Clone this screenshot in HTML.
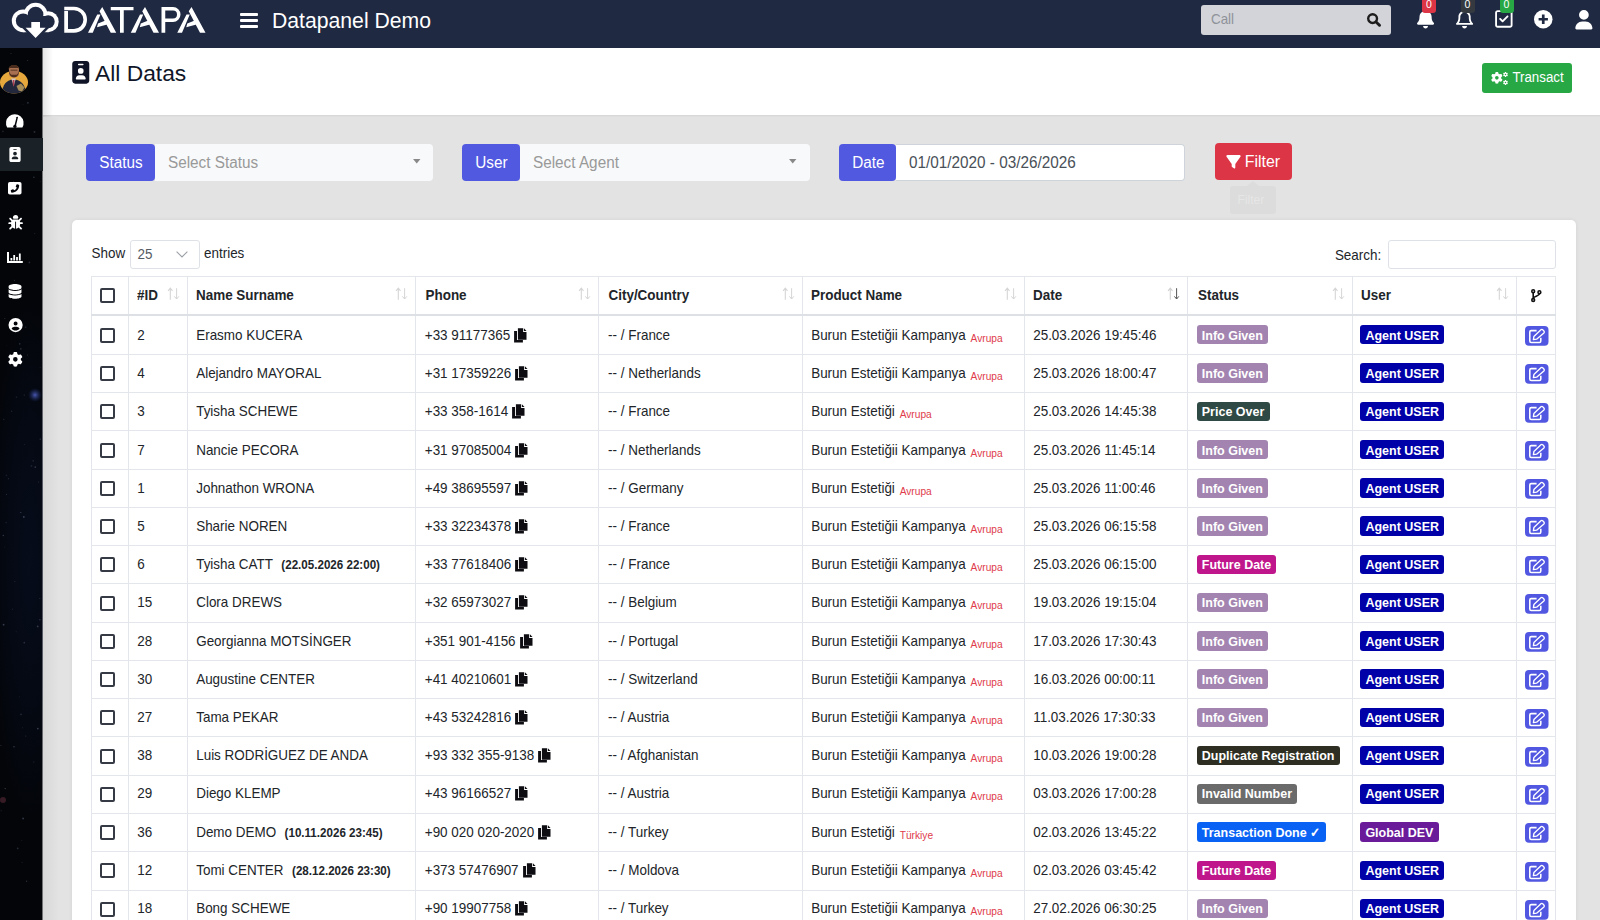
<!DOCTYPE html><html><head><meta charset="utf-8"><style>
html,body{margin:0;padding:0;width:1600px;height:920px;overflow:hidden;background:#e3e3e3;font-family:"Liberation Sans",sans-serif;}
.a{position:absolute;}
.t{position:absolute;line-height:1;white-space:nowrap;}
svg{overflow:visible}
</style></head><body>
<div class="a" style="left:0.00px;top:0.00px;width:1600.00px;height:48.00px;background:#1f2942;"></div>
<svg class="a" style="left:0.00px;top:0.00px;" width="220.00" height="48.00" viewBox="0 0 220 48"><g fill="#fff">
<circle cx="23.2" cy="20.8" r="11.4"/><circle cx="35.6" cy="14.6" r="11.8"/><circle cx="48.2" cy="21.7" r="10.5"/>
<rect x="23.2" y="14.6" width="25" height="17.6"/></g>
<g fill="#1f2942"><circle cx="23.2" cy="20.8" r="7.4"/><circle cx="35.6" cy="14.6" r="7.8"/><circle cx="48.2" cy="21.7" r="6.5"/>
<rect x="23.2" y="16" width="25" height="12.2"/></g>
<path d="M31.3 21.9 H40 V27.8 H45.6 L35.6 38.1 L25.6 27.8 H31.3 Z" fill="#1f2942" stroke="#1f2942" stroke-width="5" stroke-linejoin="miter"/>
<path d="M31.3 21.9 H40 V27.8 H45.6 L35.6 38.1 L25.6 27.8 H31.3 Z" fill="#fff"/>
<g fill="#fff">
<path d="M64.25 6.75 H74 A13 13 0 0 1 74 32.75 H64.25 V11.1 H68 V29.1 H74 A9.35 9.35 0 0 0 74 10.25 H64.25 Z"/>
<path d="M99.50 11.25 L102.25 7.00 L116.25 32.75 L110.75 32.75 Z M88.00 32.75 L92.75 32.75 L100.50 14.50 L97.25 14.50 Z M97.00 27.25 L98.00 23.60 L105.50 20.40 L107.20 24.50 Z"/>
<path d="M110.75 7 H133.5 V10.25 H123.75 V32.75 H120 V10.25 H110.75 Z"/>
<path d="M142.25 11.25 L145.00 7.00 L159.00 32.75 L153.50 32.75 Z M130.75 32.75 L135.50 32.75 L143.25 14.50 L140.00 14.50 Z M139.75 27.25 L140.75 23.60 L148.25 20.40 L149.95 24.50 Z"/>
<path d="M161.5 7 H173 A7.5 7.5 0 0 1 173 22 H165.25 V32.75 H161.5 Z M165.25 10.5 V18.5 H173 A4 4 0 0 0 173 10.5 Z"/>
<path d="M188.75 11.25 L191.50 7.00 L205.50 32.75 L200.00 32.75 Z M177.25 32.75 L182.00 32.75 L189.75 14.50 L186.50 14.50 Z M186.25 27.25 L187.25 23.60 L194.75 20.40 L196.45 24.50 Z"/>
</g></svg>
<div class="a" style="left:239.80px;top:12.50px;width:18.40px;height:3.20px;background:#fff;border-radius:1px"></div>
<div class="a" style="left:239.80px;top:19.00px;width:18.40px;height:3.20px;background:#fff;border-radius:1px"></div>
<div class="a" style="left:239.80px;top:24.90px;width:18.40px;height:3.20px;background:#fff;border-radius:1px"></div>
<div class="t" style="left:272.00px;top:10.00px;font-size:21.2px;color:#fff;font-weight:400;">Datapanel Demo</div>
<div class="a" style="left:1201.00px;top:5.00px;width:190.00px;height:30.00px;background:#d3d4d9;border-radius:3px"></div>
<div class="t" style="left:1211.00px;top:13.00px;font-size:13.4px;color:#8e9299;font-weight:400;transform:scaleY(1.07);transform-origin:0 11.00px;">Call</div>
<svg class="a" style="left:1367.40px;top:12.80px;" width="13.80" height="13.20" viewBox="0 0 13.8 13.2"><circle cx="5.6" cy="5.6" r="4.4" fill="none" stroke="#1d1d1d" stroke-width="2.4"/><path d="M8.8 8.8 L12.6 12.4" stroke="#1d1d1d" stroke-width="2.8" stroke-linecap="round"/></svg>
<svg class="a" style="left:1416.60px;top:9.30px;" width="17.10" height="19.50" viewBox="0 0 448 512"><path fill="#fff" d="M224 0c-17.7 0-32 14.3-32 32V51.2C119 66 64 130.6 64 208v18.8c0 47-17.3 92.4-48.5 127.6l-7.4 8.3c-8.4 9.4-10.4 22.9-5.3 34.4S19.4 416 32 416H416c12.6 0 24-7.4 29.2-18.9s3.1-25-5.3-34.4l-7.4-8.3C401.3 319.2 384 273.9 384 226.8V208c0-77.4-55-142-128-156.8V32c0-17.7-14.3-32-32-32zm45.3 493.3c12-12 18.7-28.3 18.7-45.3H224 160c0 17 6.7 33.3 18.7 45.3s28.3 18.7 45.3 18.7s33.3-6.7 45.3-18.7z"/></svg>
<svg class="a" style="left:1455.60px;top:9.30px;" width="17.10" height="19.50" viewBox="0 0 448 512"><path fill="#fff" d="M224 0c-17.7 0-32 14.3-32 32V49.9C119.5 61.4 64 124.2 64 200v33.4c0 45.4-15.5 89.5-43.8 124.9L5.3 377c-5.8 7.2-6.9 17.1-2.9 25.4S14.8 416 24 416H424c9.2 0 17.6-5.3 21.6-13.6s2.9-18.2-2.9-25.4l-14.9-18.6C399.5 322.9 384 278.8 384 233.4V200c0-75.8-55.5-138.6-128-150.1V32c0-17.7-14.3-32-32-32zm0 96h8c57.4 0 104 46.6 104 104v33.4c0 47.9 13.9 94.6 39.7 134.6H72.3C98.1 328 112 281.3 112 233.4V200c0-57.4 46.6-104 104-104h8zm64 352H224 160c0 17 6.7 33.3 18.7 45.3s28.3 18.7 45.3 18.7s33.3-6.7 45.3-18.7s18.7-28.3 18.7-45.3z"/></svg>
<svg class="a" style="left:1494.60px;top:9.30px;" width="17.70" height="19.90" viewBox="0 0 448 512"><path fill="#fff" d="M64 80c-8.8 0-16 7.2-16 16V416c0 8.8 7.2 16 16 16H384c8.8 0 16-7.2 16-16V96c0-8.8-7.2-16-16-16H64zM0 96C0 60.7 28.7 32 64 32H384c35.3 0 64 28.7 64 64V416c0 35.3-28.7 64-64 64H64c-35.3 0-64-28.7-64-64V96zM337 209L209 337c-9.4 9.4-24.6 9.4-33.9 0l-64-64c-9.4-9.4-9.4-24.6 0-33.9s24.6-9.4 33.9 0l47 47L303 175c9.4-9.4 24.6-9.4 33.9 0s9.4 24.6 0 33.9z"/></svg>
<div class="a" style="left:1422.00px;top:-3.00px;width:14.00px;height:15.80px;background:#dc3545;border-radius:3px"></div>
<div class="t" style="left:1426.00px;top:-1.00px;font-size:10.5px;color:#fff;font-weight:400;transform:scaleY(1.07);transform-origin:0 9.00px;">0</div>
<div class="a" style="left:1460.50px;top:-3.00px;width:14.00px;height:15.80px;background:#343a40;border-radius:3px"></div>
<div class="t" style="left:1464.50px;top:-1.00px;font-size:10.5px;color:#fff;font-weight:400;transform:scaleY(1.07);transform-origin:0 9.00px;">0</div>
<div class="a" style="left:1499.50px;top:-3.00px;width:14.00px;height:15.80px;background:#28a745;border-radius:3px"></div>
<div class="t" style="left:1503.50px;top:-1.00px;font-size:10.5px;color:#fff;font-weight:400;transform:scaleY(1.07);transform-origin:0 9.00px;">0</div>
<svg class="a" style="left:1534.30px;top:9.80px;" width="18.50" height="18.50" viewBox="0 0 18.5 18.5"><circle cx="9.25" cy="9.25" r="9.25" fill="#fff"/><path d="M9.25 4.6 V13.9 M4.6 9.25 H13.9" stroke="#1f2942" stroke-width="2.7"/></svg>
<svg class="a" style="left:1575.00px;top:9.80px;" width="17.80" height="19.50" viewBox="0 0 448 512"><path fill="#fff" d="M224 256A128 128 0 1 0 224 0a128 128 0 1 0 0 256zm-45.7 48C79.8 304 0 383.8 0 482.3C0 498.7 13.3 512 29.7 512H418.3c16.4 0 29.7-13.3 29.7-29.7C448 383.8 368.2 304 269.7 304H178.3z"/></svg>
<svg class="a" style="left:0.00px;top:48.00px;overflow:hidden" width="42.50" height="872.00" viewBox="0 48 42.5 872"><defs><radialGradient id="glow1"><stop offset="0" stop-color="#5060c0" stop-opacity="0.9"/><stop offset="1" stop-color="#203070" stop-opacity="0"/></radialGradient><radialGradient id="glow2"><stop offset="0" stop-color="#0a1430" stop-opacity="0.45"/><stop offset="1" stop-color="#0c1a40" stop-opacity="0"/></radialGradient></defs><rect x="0" y="48" width="42.5" height="872" fill="#030509"/><ellipse cx="30" cy="560" rx="40" ry="260" fill="url(#glow2)"/><circle cx="35" cy="395" r="7" fill="url(#glow1)"/><circle cx="3" cy="800" r="3" fill="#6a3040" opacity="0.5"/><circle cx="13.6" cy="181.2" r="0.5" fill="rgba(200,210,255,0.21)"/><circle cx="34.5" cy="131.9" r="0.9" fill="rgba(200,210,255,0.20)"/><circle cx="9.0" cy="124.8" r="0.5" fill="rgba(200,210,255,0.16)"/><circle cx="3.8" cy="419.3" r="0.5" fill="rgba(200,210,255,0.25)"/><circle cx="39.8" cy="598.6" r="0.5" fill="rgba(200,210,255,0.20)"/><circle cx="24.2" cy="395.1" r="0.5" fill="rgba(200,210,255,0.28)"/><circle cx="23.4" cy="165.9" r="0.9" fill="rgba(200,210,255,0.16)"/><circle cx="4.9" cy="318.4" r="0.5" fill="rgba(200,210,255,0.24)"/><circle cx="4.3" cy="546.9" r="0.5" fill="rgba(200,210,255,0.12)"/><circle cx="23.0" cy="104.6" r="0.5" fill="rgba(200,210,255,0.09)"/><circle cx="20.8" cy="512.6" r="0.7" fill="rgba(200,210,255,0.24)"/><circle cx="24.6" cy="444.3" r="0.5" fill="rgba(200,210,255,0.14)"/><circle cx="29.4" cy="262.4" r="0.9" fill="rgba(200,210,255,0.19)"/><circle cx="20.8" cy="348.8" r="0.9" fill="rgba(200,210,255,0.17)"/><circle cx="41.2" cy="152.7" r="0.7" fill="rgba(200,210,255,0.16)"/><circle cx="6.4" cy="475.4" r="0.9" fill="rgba(200,210,255,0.09)"/><circle cx="3.3" cy="535.5" r="0.7" fill="rgba(200,210,255,0.24)"/><circle cx="14.3" cy="354.7" r="0.7" fill="rgba(200,210,255,0.18)"/><circle cx="2.9" cy="131.4" r="0.9" fill="rgba(200,210,255,0.13)"/><circle cx="27.9" cy="102.8" r="0.9" fill="rgba(200,210,255,0.22)"/><circle cx="24.3" cy="642.7" r="0.9" fill="rgba(200,210,255,0.17)"/><circle cx="16.2" cy="631.7" r="0.7" fill="rgba(200,210,255,0.08)"/><circle cx="14.9" cy="581.5" r="0.5" fill="rgba(200,210,255,0.18)"/><circle cx="32.3" cy="162.5" r="0.7" fill="rgba(200,210,255,0.13)"/><circle cx="38.5" cy="482.0" r="0.7" fill="rgba(200,210,255,0.11)"/><circle cx="23.1" cy="818.5" r="0.9" fill="rgba(200,210,255,0.24)"/><circle cx="11.7" cy="411.3" r="0.7" fill="rgba(200,210,255,0.15)"/><circle cx="40.2" cy="181.3" r="0.5" fill="rgba(200,210,255,0.12)"/><circle cx="27.7" cy="60.5" r="0.5" fill="rgba(200,210,255,0.25)"/><circle cx="11.0" cy="53.6" r="0.7" fill="rgba(200,210,255,0.16)"/><circle cx="25.6" cy="327.2" r="0.9" fill="rgba(200,210,255,0.11)"/><circle cx="39.9" cy="619.8" r="0.7" fill="rgba(200,210,255,0.23)"/><circle cx="37.8" cy="728.6" r="0.9" fill="rgba(200,210,255,0.25)"/><circle cx="16.5" cy="397.1" r="0.9" fill="rgba(200,210,255,0.10)"/><circle cx="16.8" cy="215.8" r="0.7" fill="rgba(200,210,255,0.28)"/><circle cx="6.8" cy="345.8" r="0.5" fill="rgba(200,210,255,0.09)"/><circle cx="23.8" cy="516.9" r="0.9" fill="rgba(200,210,255,0.27)"/><circle cx="1.1" cy="810.7" r="0.5" fill="rgba(200,210,255,0.20)"/><circle cx="26.6" cy="881.3" r="0.7" fill="rgba(200,210,255,0.20)"/><circle cx="5.2" cy="788.6" r="0.7" fill="rgba(200,210,255,0.28)"/><circle cx="20.2" cy="321.3" r="0.9" fill="rgba(200,210,255,0.11)"/><circle cx="14.4" cy="280.3" r="0.5" fill="rgba(200,210,255,0.25)"/><circle cx="21.7" cy="228.5" r="0.7" fill="rgba(200,210,255,0.27)"/><circle cx="6.2" cy="522.6" r="0.9" fill="rgba(200,210,255,0.09)"/><circle cx="12.5" cy="609.3" r="0.7" fill="rgba(200,210,255,0.10)"/><circle cx="21.8" cy="840.2" r="0.5" fill="rgba(200,210,255,0.15)"/><circle cx="22.4" cy="727.8" r="0.5" fill="rgba(200,210,255,0.15)"/><circle cx="25.8" cy="735.9" r="0.5" fill="rgba(200,210,255,0.23)"/><circle cx="33.9" cy="761.9" r="0.5" fill="rgba(200,210,255,0.23)"/><circle cx="8.4" cy="478.7" r="0.5" fill="rgba(200,210,255,0.23)"/><circle cx="33.2" cy="460.8" r="0.9" fill="rgba(200,210,255,0.12)"/><circle cx="40.2" cy="439.1" r="0.7" fill="rgba(200,210,255,0.27)"/><circle cx="40.1" cy="367.2" r="0.5" fill="rgba(200,210,255,0.12)"/><circle cx="19.7" cy="343.8" r="0.9" fill="rgba(200,210,255,0.18)"/><circle cx="35.3" cy="467.1" r="0.9" fill="rgba(200,210,255,0.21)"/><circle cx="3.6" cy="624.7" r="0.9" fill="rgba(200,210,255,0.26)"/><circle cx="31.5" cy="465.9" r="0.9" fill="rgba(200,210,255,0.12)"/><circle cx="14.0" cy="746.7" r="0.7" fill="rgba(200,210,255,0.27)"/><circle cx="19.5" cy="696.7" r="0.5" fill="rgba(200,210,255,0.10)"/><circle cx="7.1" cy="160.5" r="0.7" fill="rgba(200,210,255,0.11)"/><circle cx="33.9" cy="177.2" r="0.7" fill="rgba(200,210,255,0.25)"/><circle cx="27.6" cy="354.9" r="0.5" fill="rgba(200,210,255,0.19)"/><circle cx="0.9" cy="745.4" r="0.5" fill="rgba(200,210,255,0.23)"/><circle cx="22.1" cy="862.3" r="0.5" fill="rgba(200,210,255,0.17)"/><circle cx="34.7" cy="233.6" r="0.7" fill="rgba(200,210,255,0.13)"/><circle cx="21.0" cy="714.4" r="0.9" fill="rgba(200,210,255,0.15)"/><circle cx="17.6" cy="164.0" r="0.7" fill="rgba(200,210,255,0.26)"/><circle cx="37.7" cy="626.4" r="0.9" fill="rgba(200,210,255,0.24)"/><circle cx="17.7" cy="848.4" r="0.9" fill="rgba(200,210,255,0.18)"/><circle cx="6.4" cy="494.2" r="0.5" fill="rgba(200,210,255,0.25)"/></svg>
<div class="a" style="left:0.00px;top:137.50px;width:42.50px;height:33.20px;background:#1b2227;"></div>
<svg class="a" style="left:0.00px;top:0.00px;" width="42.00" height="100.00" viewBox="0 0 42 100"><defs><clipPath id="avc"><ellipse cx="14" cy="82.3" rx="14" ry="11.3"/></clipPath></defs><ellipse cx="14" cy="82.3" rx="14" ry="11.3" fill="#e6a83c"/><g clip-path="url(#avc)"><path d="M1.5 97 C2 86 5 80.2 13.5 79.2 C22 80.2 25.5 85 27 97 Z" fill="#24283c"/><path d="M11.2 78.6 H16 L14.8 82 L13.6 86 L12.4 82 Z" fill="#d8c4c4"/><path d="M12.7 80 H14.5 L14.3 84.8 L13.6 86.8 L12.9 84.8 Z" fill="#a84050"/><path d="M16.5 86 L21 83.6 L24.5 87.5 L22 91.5 L18.5 90.5 Z" fill="#c8a860" opacity="0.8"/></g><path d="M9.0 68.5 C9.0 64.0 19.0 64.0 19.0 68.5 L18.8 74.8 C18 78.4 10 78.4 9.2 74.8 Z" fill="#a87050"/><path d="M8.4 70.0 C8.0 63.2 19.8 63.2 19.4 70.0 L18.6 68.0 L9.4 68.0 Z" fill="#4a2c1c"/><path d="M9.0 71.0 C8.8 79.4 19.2 79.4 19.0 71.0 L18.0 73.4 L16.6 74.8 L11.4 74.8 L10.0 73.4 Z" fill="#4e2e1e"/><rect x="10.6" y="69.6" width="6.8" height="1.2" fill="#3a2418" opacity="0.6"/></svg>
<svg class="a" style="left:6.40px;top:113.50px;" width="17.60" height="13.50" viewBox="0 0 17.6 13.5"><path fill="#fff" d="M1.2 13.5 A8.8 8.8 0 1 1 16.4 13.5 Z"/><path d="M11.2 3.4 L9.2 11.8" stroke="#05070d" stroke-width="1.5" stroke-linecap="round"/><circle cx="8.9" cy="12.4" r="1.7" fill="#05070d"/></svg>
<svg class="a" style="left:9.20px;top:146.70px;" width="12.00" height="15.00" viewBox="0 0 384 512"><path fill="#fff" d="M64 0C28.7 0 0 28.7 0 64V448c0 35.3 28.7 64 64 64H320c35.3 0 64-28.7 64-64V64c0-35.3-28.7-64-64-64H64zm96 320h64c44.2 0 80 35.8 80 80c0 8.8-7.2 16-16 16H96c-8.8 0-16-7.2-16-16c0-44.2 35.8-80 80-80zm-32-96a64 64 0 1 1 128 0 64 64 0 1 1 -128 0zM144 64h96c8.8 0 16 7.2 16 16s-7.2 16-16 16H144c-8.8 0-16-7.2-16-16s7.2-16 16-16z"/></svg>
<svg class="a" style="left:8.20px;top:182.00px;" width="13.50" height="12.50" viewBox="0 0 13.5 12.5"><rect x="0" y="0" width="13.5" height="12.5" rx="1.8" fill="#fff"/><g transform="translate(11.2,2.3) scale(-0.0165,0.0165)"><path fill="#05070d" d="M164.9 24.6c-7.7-18.6-28-28.5-47.4-23.2l-88 24C12.1 30.2 0 46 0 64C0 311.4 200.6 512 448 512c18 0 33.8-12.1 38.6-29.5l24-88c5.3-19.4-4.6-39.7-23.2-47.4l-96-40c-16.3-6.8-35.2-2.1-46.3 11.6L304.7 368C234.3 334.7 177.3 277.700 144 207.3L193.3 167c13.7-11.2 18.4-30 11.6-46.3l-40-96z"/></g></svg>
<svg class="a" style="left:7.60px;top:214.60px;" width="15.20" height="14.60" viewBox="0 0 512 512"><path fill="#fff" d="M256 0c53 0 96 43 96 96v3.6c0 15.7-12.7 28.4-28.4 28.4H188.4c-15.7 0-28.4-12.7-28.4-28.4V96c0-53 43-96 96-96zM41.4 105.4c12.5-12.5 32.8-12.5 45.3 0l64 64c.7 .7 1.3 1.4 1.9 2.1c14.2-7.3 30.4-11.4 47.5-11.4H312c17.1 0 33.2 4.1 47.5 11.4c.6-.7 1.2-1.4 1.900-2.1l64-64c12.5-12.5 32.8-12.5 45.3 0s12.5 32.8 0 45.3l-64 64c-.7 .7-1.4 1.3-2.1 1.9c6.2 12 10.1 25.3 11.1 39.5H480c17.7 0 32 14.3 32 32s-14.3 32-32 32H416c0 24.6-5.5 47.8-15.4 68.6c2.2 1.3 4.2 2.9 6 4.8l64 64c12.5 12.5 12.5 32.8 0 45.300s-32.8 12.5-45.3 0l-63.1-63.1c-24.5 21.8-55.8 36.2-90.3 39.6V240c0-8.8-7.2-16-16-16s-16 7.2-16 16V479.2c-34.5-3.4-65.8-17.8-90.3-39.6L86.6 502.6c-12.5 12.5-32.8 12.5-45.3 0s-12.5-32.8 0-45.3l64-64c1.9-1.9 3.9-3.4 6-4.8C101.5 367.8 96 344.6 96 320H32c-17.7 0-32-14.3-32-32s14.3-32 32-32H96.3c1.1-14.1 5-27.5 11.1-39.5c-.7-.6-1.4-1.2-2.1-1.9l-64-64c-12.5-12.5-12.5-32.8 0-45.3z"/></svg>
<svg class="a" style="left:7.00px;top:251.50px;" width="15.80" height="11.00" viewBox="0 0 15.8 11"><path fill="#fff" d="M0 0 H2 V9 H15.8 V11 H0 Z"/><rect x="3.5" y="6" width="1.8" height="2.5" fill="#fff"/><rect x="6.3" y="3" width="1.8" height="5.5" fill="#fff"/><rect x="9.1" y="5" width="1.8" height="3.5" fill="#fff"/><rect x="11.9" y="1.5" width="1.8" height="7" fill="#fff"/></svg>
<svg class="a" style="left:8.20px;top:283.60px;" width="14.10" height="14.70" viewBox="0 0 448 512"><path fill="#fff" d="M448 80v48c0 44.2-100.3 80-224 80S0 172.2 0 128V80C0 35.8 100.3 0 224 0S448 35.8 448 80zM393.2 214.7c20.8-7.4 39.9-16.9 54.8-28.6V288c0 44.2-100.3 80-224 80S0 332.2 0 288V186.1c14.9 11.8 34 21.2 54.8 28.6C99.7 230.7 159.5 240 224 240s124.3-9.3 169.2-25.3zM0 346.1c14.9 11.8 34 21.2 54.8 28.6C99.7 390.7 159.5 400 224 400s124.3-9.3 169.2-25.3c20.8-7.4 39.9-16.9 54.8-28.6V432c0 44.2-100.3 80-224 80S0 476.2 0 432V346.1z"/></svg>
<svg class="a" style="left:7.60px;top:317.80px;" width="15.20" height="14.20" viewBox="0 0 512 512"><path fill="#fff" d="M399 384.2C376.9 345.8 335.4 320 288 320H224c-47.4 0-88.9 25.8-111 64.2c35.2 39.2 86.2 63.8 143 63.8s107.8-24.7 143-63.8zM0 256a256 256 0 1 1 512 0A256 256 0 1 1 0 256zm256 16a72 72 0 1 0 0-144 72 72 0 1 0 0 144z"/></svg>
<svg class="a" style="left:7.60px;top:351.50px;" width="14.70" height="14.70" viewBox="0 0 512 512"><path fill="#fff" d="M495.9 166.6c3.2 8.7 .5 18.4-6.4 24.6l-43.3 39.4c1.1 8.3 1.7 16.8 1.7 25.4s-.6 17.1-1.7 25.4l43.3 39.4c6.9 6.2 9.6 15.9 6.4 24.6c-4.4 11.9-9.7 23.3-15.8 34.3l-4.7 8.1c-6.6 11-14 21.4-22.1 31.2c-5.9 7.2-15.7 9.6-24.5 6.8l-55.7-17.7c-13.4 10.3-28.2 18.9-44 25.4l-12.5 57.1c-2 9.1-9 16.3-18.2 17.8c-13.8 2.3-28 3.5-42.5 3.5s-28.7-1.2-42.5-3.5c-9.2-1.5-16.2-8.7-18.2-17.8l-12.5-57.1c-15.8-6.5-30.6-15.1-44-25.4L83.1 425.9c-8.8 2.8-18.6 .3-24.5-6.8c-8.1-9.8-15.5-20.2-22.1-31.2l-4.7-8.1c-6.1-11-11.4-22.4-15.8-34.3c-3.2-8.7-.5-18.4 6.4-24.6l43.3-39.4C64.6 273.1 64 264.6 64 256s.6-17.1 1.7-25.4L22.4 191.2c-6.9-6.2-9.6-15.9-6.4-24.6c4.4-11.9 9.7-23.3 15.8-34.3l4.7-8.1c6.6-11 14-21.4 22.1-31.2c5.9-7.2 15.7-9.6 24.5-6.8l55.7 17.7c13.4-10.3 28.2-18.9 44-25.4l12.5-57.1c2-9.1 9-16.3 18.2-17.8C227.3 1.2 241.5 0 256 0s28.7 1.2 42.5 3.5c9.2 1.5 16.2 8.7 18.2 17.8l12.5 57.1c15.8 6.5 30.600 15.1 44 25.4l55.7-17.7c8.8-2.8 18.6-.3 24.5 6.8c8.1 9.8 15.5 20.2 22.1 31.2l4.7 8.1c6.1 11 11.4 22.4 15.8 34.3zM256 336a80 80 0 1 0 0-160 80 80 0 1 0 0 160z"/></svg>
<div class="a" style="left:42.50px;top:48.00px;width:1557.50px;height:66.80px;background:#fff;"></div>
<div class="a" style="left:42.50px;top:114.80px;width:1557.50px;height:2.00px;background:linear-gradient(#d4d4d4,#e3e3e3);"></div>
<div class="a" style="left:42.50px;top:48.00px;width:10.00px;height:69.00px;background:linear-gradient(90deg,rgba(0,0,0,0.10),rgba(0,0,0,0));"></div>
<div class="a" style="left:42.50px;top:117.00px;width:16.00px;height:803.00px;background:linear-gradient(90deg,rgba(0,0,0,0.05),rgba(0,0,0,0));"></div>
<svg class="a" style="left:71.80px;top:61.00px;" width="17.50" height="22.70" viewBox="0 0 384 512"><path fill="#0f1426" d="M64 0C28.7 0 0 28.7 0 64V448c0 35.3 28.7 64 64 64H320c35.3 0 64-28.7 64-64V64c0-35.3-28.7-64-64-64H64zm96 320h64c44.2 0 80 35.8 80 80c0 8.8-7.2 16-16 16H96c-8.8 0-16-7.2-16-16c0-44.2 35.8-80 80-80zm-32-96a64 64 0 1 1 128 0 64 64 0 1 1 -128 0zM144 64h96c8.8 0 16 7.2 16 16s-7.2 16-16 16H144c-8.8 0-16-7.2-16-16s7.2-16 16-16z"/></svg>
<div class="t" style="left:95.00px;top:62.00px;font-size:22.8px;color:#0f1628;font-weight:400;">All Datas</div>
<div class="a" style="left:1482.00px;top:63.00px;width:90.00px;height:30.00px;background:#28a745;border-radius:3px"></div>
<svg class="a" style="left:1490.60px;top:72.20px;" width="11.70" height="11.70" viewBox="0 0 512 512"><path fill="#fff" d="M495.9 166.6c3.2 8.7 .5 18.4-6.4 24.6l-43.3 39.4c1.1 8.3 1.7 16.8 1.7 25.4s-.6 17.1-1.7 25.4l43.3 39.4c6.9 6.2 9.6 15.9 6.4 24.6c-4.4 11.9-9.7 23.3-15.8 34.3l-4.7 8.1c-6.6 11-14 21.4-22.1 31.2c-5.9 7.2-15.7 9.6-24.5 6.8l-55.7-17.7c-13.4 10.3-28.2 18.9-44 25.4l-12.5 57.1c-2 9.1-9 16.3-18.2 17.8c-13.8 2.3-28 3.5-42.5 3.5s-28.7-1.2-42.5-3.5c-9.2-1.5-16.2-8.7-18.2-17.8l-12.5-57.1c-15.8-6.5-30.6-15.1-44-25.4L83.1 425.9c-8.8 2.8-18.6 .3-24.5-6.8c-8.1-9.8-15.5-20.2-22.1-31.2l-4.7-8.1c-6.1-11-11.4-22.4-15.8-34.3c-3.2-8.7-.5-18.4 6.4-24.6l43.3-39.4C64.6 273.1 64 264.6 64 256s.6-17.1 1.7-25.4L22.4 191.2c-6.9-6.2-9.6-15.9-6.4-24.6c4.4-11.9 9.7-23.3 15.8-34.3l4.7-8.1c6.6-11 14-21.4 22.1-31.2c5.9-7.2 15.7-9.6 24.5-6.8l55.7 17.7c13.4-10.3 28.2-18.9 44-25.4l12.5-57.1c2-9.1 9-16.3 18.2-17.8C227.3 1.2 241.5 0 256 0s28.7 1.2 42.5 3.5c9.2 1.5 16.2 8.7 18.2 17.8l12.5 57.1c15.8 6.5 30.600 15.1 44 25.4l55.7-17.7c8.8-2.8 18.6-.3 24.5 6.8c8.1 9.8 15.5 20.2 22.1 31.2l4.7 8.1c6.1 11 11.4 22.4 15.8 34.3zM256 336a80 80 0 1 0 0-160 80 80 0 1 0 0 160z"/></svg>
<svg class="a" style="left:1503.00px;top:71.70px;" width="5.00" height="5.00" viewBox="0 0 512 512"><path fill="#fff" d="M495.9 166.6c3.2 8.7 .5 18.4-6.4 24.6l-43.3 39.4c1.1 8.3 1.7 16.8 1.7 25.4s-.6 17.1-1.7 25.4l43.3 39.4c6.9 6.2 9.6 15.9 6.4 24.6c-4.4 11.9-9.7 23.3-15.8 34.3l-4.7 8.1c-6.6 11-14 21.4-22.1 31.2c-5.9 7.2-15.7 9.6-24.5 6.8l-55.7-17.7c-13.4 10.3-28.2 18.9-44 25.4l-12.5 57.1c-2 9.1-9 16.3-18.2 17.8c-13.8 2.3-28 3.5-42.5 3.5s-28.7-1.2-42.5-3.5c-9.2-1.5-16.2-8.7-18.2-17.8l-12.5-57.1c-15.8-6.5-30.6-15.1-44-25.4L83.1 425.9c-8.8 2.8-18.6 .3-24.5-6.8c-8.1-9.8-15.5-20.2-22.1-31.2l-4.7-8.1c-6.1-11-11.4-22.4-15.8-34.3c-3.2-8.7-.5-18.4 6.4-24.6l43.3-39.4C64.6 273.1 64 264.6 64 256s.6-17.1 1.7-25.4L22.4 191.2c-6.9-6.2-9.6-15.9-6.4-24.6c4.4-11.9 9.7-23.3 15.8-34.3l4.7-8.1c6.6-11 14-21.4 22.1-31.2c5.9-7.2 15.7-9.6 24.5-6.8l55.7 17.7c13.4-10.3 28.2-18.9 44-25.4l12.5-57.1c2-9.1 9-16.3 18.2-17.8C227.3 1.2 241.5 0 256 0s28.7 1.2 42.5 3.5c9.2 1.5 16.2 8.7 18.2 17.8l12.5 57.1c15.8 6.5 30.600 15.1 44 25.4l55.7-17.7c8.8-2.8 18.6-.3 24.5 6.8c8.1 9.8 15.5 20.2 22.1 31.2l4.7 8.1c6.1 11 11.4 22.4 15.8 34.3zM256 336a80 80 0 1 0 0-160 80 80 0 1 0 0 160z"/></svg>
<svg class="a" style="left:1503.00px;top:79.60px;" width="5.00" height="5.00" viewBox="0 0 512 512"><path fill="#fff" d="M495.9 166.6c3.2 8.7 .5 18.4-6.4 24.6l-43.3 39.4c1.1 8.3 1.7 16.8 1.7 25.4s-.6 17.1-1.7 25.4l43.3 39.4c6.9 6.2 9.6 15.9 6.4 24.6c-4.4 11.9-9.7 23.3-15.8 34.3l-4.7 8.1c-6.6 11-14 21.4-22.1 31.2c-5.9 7.2-15.7 9.6-24.5 6.8l-55.7-17.7c-13.4 10.3-28.2 18.9-44 25.4l-12.5 57.1c-2 9.1-9 16.3-18.2 17.8c-13.8 2.3-28 3.5-42.5 3.5s-28.7-1.2-42.5-3.5c-9.2-1.5-16.2-8.7-18.2-17.8l-12.5-57.1c-15.8-6.5-30.6-15.1-44-25.4L83.1 425.9c-8.8 2.8-18.6 .3-24.5-6.8c-8.1-9.8-15.5-20.2-22.1-31.2l-4.7-8.1c-6.1-11-11.4-22.4-15.8-34.3c-3.2-8.7-.5-18.4 6.4-24.6l43.3-39.4C64.6 273.1 64 264.6 64 256s.6-17.1 1.7-25.4L22.4 191.2c-6.9-6.2-9.6-15.9-6.4-24.6c4.4-11.9 9.7-23.3 15.8-34.3l4.7-8.1c6.6-11 14-21.4 22.1-31.2c5.9-7.2 15.7-9.6 24.5-6.8l55.7 17.7c13.4-10.3 28.2-18.9 44-25.4l12.5-57.1c2-9.1 9-16.3 18.2-17.8C227.3 1.2 241.5 0 256 0s28.7 1.2 42.5 3.5c9.2 1.5 16.2 8.7 18.2 17.8l12.5 57.1c15.8 6.5 30.600 15.1 44 25.4l55.7-17.7c8.8-2.8 18.6-.3 24.5 6.8c8.1 9.8 15.5 20.2 22.1 31.2l4.7 8.1c6.1 11 11.4 22.4 15.8 34.3zM256 336a80 80 0 1 0 0-160 80 80 0 1 0 0 160z"/></svg>
<div class="t" style="left:1512.40px;top:71.00px;font-size:13.3px;color:#fff;font-weight:400;transform:scaleY(1.07);transform-origin:0 11.00px;">Transact</div>
<div class="a" style="left:86.00px;top:144.00px;width:69.00px;height:36.60px;background:#5059e0;border-radius:4px"></div>
<div class="t" style="left:99.30px;top:155.00px;font-size:15.3px;color:#fff;font-weight:400;transform:scaleY(1.07);transform-origin:0 13.00px;">Status</div>
<div class="a" style="left:155.00px;top:144.00px;width:278.00px;height:36.60px;background:#f8f9fa;border-radius:0 4px 4px 0;box-sizing:border-box;"></div>
<div class="t" style="left:168.00px;top:155.00px;font-size:15.3px;color:#999;font-weight:400;transform:scaleY(1.07);transform-origin:0 13.00px;">Select Status</div>
<svg class="a" style="left:412.50px;top:159.40px;" width="7.50" height="4.40" viewBox="0 0 10 6"><path d="M0 0 H10 L5 6 Z" fill="#888"/></svg>
<div class="a" style="left:462.00px;top:144.00px;width:58.00px;height:36.60px;background:#5059e0;border-radius:4px"></div>
<div class="t" style="left:475.30px;top:155.00px;font-size:15.3px;color:#fff;font-weight:400;transform:scaleY(1.07);transform-origin:0 13.00px;">User</div>
<div class="a" style="left:520.00px;top:144.00px;width:289.50px;height:36.60px;background:#f8f9fa;border-radius:0 4px 4px 0;box-sizing:border-box;"></div>
<div class="t" style="left:533.00px;top:155.00px;font-size:15.3px;color:#999;font-weight:400;transform:scaleY(1.07);transform-origin:0 13.00px;">Select Agent</div>
<svg class="a" style="left:789.00px;top:159.40px;" width="7.50" height="4.40" viewBox="0 0 10 6"><path d="M0 0 H10 L5 6 Z" fill="#888"/></svg>
<div class="a" style="left:839.00px;top:144.00px;width:57.00px;height:36.60px;background:#5059e0;border-radius:4px"></div>
<div class="t" style="left:852.30px;top:155.00px;font-size:15.3px;color:#fff;font-weight:400;transform:scaleY(1.07);transform-origin:0 13.00px;">Date</div>
<div class="a" style="left:896.00px;top:144.00px;width:288.50px;height:36.60px;background:#fff;border-radius:0 4px 4px 0;box-sizing:border-box;border:1px solid #ced4da;border-left:none;"></div>
<div class="t" style="left:909.00px;top:155.00px;font-size:15.3px;color:#495057;font-weight:400;transform:scaleY(1.07);transform-origin:0 13.00px;">01/01/2020 - 03/26/2026</div>
<div class="a" style="left:1214.50px;top:143.10px;width:77.50px;height:36.65px;background:#dc3545;border-radius:4px"></div>
<svg class="a" style="left:1226.00px;top:155.00px;" width="15.00" height="14.40" viewBox="0 0 512 512"><path fill="#fff" d="M3.9 22.9C10.5 8.9 24.5 0 40 0H472c15.5 0 29.5 8.9 36.1 22.9s4.6 30.5-5.2 42.5L320 320.9V448c0 12.1-6.8 23.2-17.700 28.6s-23.8 4.3-33.5-3l-64-48c-8.1-6-12.8-15.5-12.8-25.6V320.9L9 65.3C-.7 53.4-2.8 36.8 3.9 22.9z"/></svg>
<div class="t" style="left:1244.80px;top:154.00px;font-size:15.9px;color:#fff;font-weight:400;transform:scaleY(1.07);transform-origin:0 13.00px;">Filter</div>
<div class="a" style="left:1230.00px;top:185.60px;width:45.60px;height:28.20px;background:#dcdcdc;border-radius:3px"></div>
<svg class="a" style="left:1247.00px;top:181.00px;" width="12.00" height="5.00" viewBox="0 0 12 5"><path d="M0 5 L6 0 L12 5 Z" fill="#dcdcdc"/></svg>
<div class="t" style="left:1237.60px;top:194.00px;font-size:12px;color:#e6e6e6;font-weight:400;transform:scaleY(1.07);transform-origin:0 10.00px;">Filter</div>
<div class="a" style="left:72.00px;top:220.00px;width:1504.00px;height:760.00px;background:#fff;border-radius:5px;box-shadow:0 0 4px rgba(0,0,0,0.07)"></div>
<div class="t" style="left:91.50px;top:247.00px;font-size:13.45px;color:#212529;font-weight:400;transform:scaleY(1.07);transform-origin:0 11.00px;">Show</div>
<div class="a" style="left:129.50px;top:239.50px;width:70.50px;height:29.00px;background:#fff;border:1px solid #dee2e6;border-radius:3px;box-sizing:border-box"></div>
<div class="t" style="left:137.50px;top:248.00px;font-size:13.45px;color:#555b62;font-weight:400;transform:scaleY(1.07);transform-origin:0 11.00px;">25</div>
<svg class="a" style="left:176.00px;top:251.00px;" width="12.00" height="6.50" viewBox="0 0 12 6.5"><path d="M0.6 0.6 L6 5.9 L11.4 0.6" fill="none" stroke="#9aa0a6" stroke-width="1.1"/></svg>
<div class="t" style="left:204.00px;top:247.00px;font-size:13.45px;color:#212529;font-weight:400;transform:scaleY(1.07);transform-origin:0 11.00px;">entries</div>
<div class="t" style="left:1334.90px;top:249.00px;font-size:13.45px;color:#212529;font-weight:400;transform:scaleY(1.07);transform-origin:0 11.00px;">Search:</div>
<div class="a" style="left:1388.25px;top:239.50px;width:167.70px;height:29.10px;background:#fff;border:1px solid #dee2e6;border-radius:3px;box-sizing:border-box"></div>
<div class="a" style="left:91.00px;top:275.60px;width:1.00px;height:644.40px;background:#e3e6ea;"></div>
<div class="a" style="left:128.00px;top:275.60px;width:1.00px;height:644.40px;background:#e3e6ea;"></div>
<div class="a" style="left:187.00px;top:275.60px;width:1.00px;height:644.40px;background:#e3e6ea;"></div>
<div class="a" style="left:415.00px;top:275.60px;width:1.00px;height:644.40px;background:#e3e6ea;"></div>
<div class="a" style="left:598.00px;top:275.60px;width:1.00px;height:644.40px;background:#e3e6ea;"></div>
<div class="a" style="left:802.00px;top:275.60px;width:1.00px;height:644.40px;background:#e3e6ea;"></div>
<div class="a" style="left:1024.00px;top:275.60px;width:1.00px;height:644.40px;background:#e3e6ea;"></div>
<div class="a" style="left:1187.00px;top:275.60px;width:1.00px;height:644.40px;background:#e3e6ea;"></div>
<div class="a" style="left:1352.00px;top:275.60px;width:1.00px;height:644.40px;background:#e3e6ea;"></div>
<div class="a" style="left:1516.00px;top:275.60px;width:1.00px;height:644.40px;background:#e3e6ea;"></div>
<div class="a" style="left:1555.00px;top:275.60px;width:1.00px;height:644.40px;background:#e3e6ea;"></div>
<div class="a" style="left:91.00px;top:275.60px;width:1465.00px;height:1.00px;background:#e3e6ea;"></div>
<div class="a" style="left:91.00px;top:314.00px;width:1465.00px;height:2.00px;background:#dde1e5;"></div>
<div class="a" style="left:91.00px;top:353.86px;width:1465.00px;height:1.00px;background:#e3e6ea;"></div>
<div class="a" style="left:91.00px;top:392.12px;width:1465.00px;height:1.00px;background:#e3e6ea;"></div>
<div class="a" style="left:91.00px;top:430.38px;width:1465.00px;height:1.00px;background:#e3e6ea;"></div>
<div class="a" style="left:91.00px;top:468.64px;width:1465.00px;height:1.00px;background:#e3e6ea;"></div>
<div class="a" style="left:91.00px;top:506.90px;width:1465.00px;height:1.00px;background:#e3e6ea;"></div>
<div class="a" style="left:91.00px;top:545.16px;width:1465.00px;height:1.00px;background:#e3e6ea;"></div>
<div class="a" style="left:91.00px;top:583.42px;width:1465.00px;height:1.00px;background:#e3e6ea;"></div>
<div class="a" style="left:91.00px;top:621.68px;width:1465.00px;height:1.00px;background:#e3e6ea;"></div>
<div class="a" style="left:91.00px;top:659.94px;width:1465.00px;height:1.00px;background:#e3e6ea;"></div>
<div class="a" style="left:91.00px;top:698.20px;width:1465.00px;height:1.00px;background:#e3e6ea;"></div>
<div class="a" style="left:91.00px;top:736.46px;width:1465.00px;height:1.00px;background:#e3e6ea;"></div>
<div class="a" style="left:91.00px;top:774.72px;width:1465.00px;height:1.00px;background:#e3e6ea;"></div>
<div class="a" style="left:91.00px;top:812.98px;width:1465.00px;height:1.00px;background:#e3e6ea;"></div>
<div class="a" style="left:91.00px;top:851.24px;width:1465.00px;height:1.00px;background:#e3e6ea;"></div>
<div class="a" style="left:91.00px;top:889.50px;width:1465.00px;height:1.00px;background:#e3e6ea;"></div>
<div class="a" style="left:91.00px;top:927.76px;width:1465.00px;height:1.00px;background:#e3e6ea;"></div>
<div class="a" style="left:100.30px;top:288.00px;width:15.00px;height:15.00px;background:transparent;border:2px solid #353a44;border-radius:2px;box-sizing:border-box"></div>
<div class="t" style="left:137.00px;top:289.00px;font-size:13.45px;color:#212529;font-weight:700;transform:scaleY(1.07);transform-origin:0 11.00px;">#ID</div>
<div class="t" style="left:196.00px;top:289.00px;font-size:13.45px;color:#212529;font-weight:700;transform:scaleY(1.07);transform-origin:0 11.00px;">Name Surname</div>
<div class="t" style="left:425.50px;top:289.00px;font-size:13.45px;color:#212529;font-weight:700;transform:scaleY(1.07);transform-origin:0 11.00px;">Phone</div>
<div class="t" style="left:608.50px;top:289.00px;font-size:13.45px;color:#212529;font-weight:700;transform:scaleY(1.07);transform-origin:0 11.00px;">City/Country</div>
<div class="t" style="left:811.00px;top:289.00px;font-size:13.45px;color:#212529;font-weight:700;transform:scaleY(1.07);transform-origin:0 11.00px;">Product Name</div>
<div class="t" style="left:1033.00px;top:289.00px;font-size:13.45px;color:#212529;font-weight:700;transform:scaleY(1.07);transform-origin:0 11.00px;">Date</div>
<div class="t" style="left:1198.00px;top:289.00px;font-size:13.45px;color:#212529;font-weight:700;transform:scaleY(1.07);transform-origin:0 11.00px;">Status</div>
<div class="t" style="left:1361.00px;top:289.00px;font-size:13.45px;color:#212529;font-weight:700;transform:scaleY(1.07);transform-origin:0 11.00px;">User</div>
<svg class="a" style="left:167.50px;top:287.70px;" width="12.00" height="12.00" viewBox="0 0 12 12"><path d="M2.3 11.8 V0.4 M0.1 2.8 L2.3 0.2 L4.5 2.8" fill="none" stroke="#d5d5d5" stroke-width="1.1"/><path d="M8.6 0.2 V10.8 M6.4 8.4 L8.6 11.0 L10.8 8.4" fill="none" stroke="#d5d5d5" stroke-width="1"/></svg>
<svg class="a" style="left:395.50px;top:287.70px;" width="12.00" height="12.00" viewBox="0 0 12 12"><path d="M2.3 11.8 V0.4 M0.1 2.8 L2.3 0.2 L4.5 2.8" fill="none" stroke="#d5d5d5" stroke-width="1.1"/><path d="M8.6 0.2 V10.8 M6.4 8.4 L8.6 11.0 L10.8 8.4" fill="none" stroke="#d5d5d5" stroke-width="1"/></svg>
<svg class="a" style="left:578.50px;top:287.70px;" width="12.00" height="12.00" viewBox="0 0 12 12"><path d="M2.3 11.8 V0.4 M0.1 2.8 L2.3 0.2 L4.5 2.8" fill="none" stroke="#d5d5d5" stroke-width="1.1"/><path d="M8.6 0.2 V10.8 M6.4 8.4 L8.6 11.0 L10.8 8.4" fill="none" stroke="#d5d5d5" stroke-width="1"/></svg>
<svg class="a" style="left:782.50px;top:287.70px;" width="12.00" height="12.00" viewBox="0 0 12 12"><path d="M2.3 11.8 V0.4 M0.1 2.8 L2.3 0.2 L4.5 2.8" fill="none" stroke="#d5d5d5" stroke-width="1.1"/><path d="M8.6 0.2 V10.8 M6.4 8.4 L8.6 11.0 L10.8 8.4" fill="none" stroke="#d5d5d5" stroke-width="1"/></svg>
<svg class="a" style="left:1004.50px;top:287.70px;" width="12.00" height="12.00" viewBox="0 0 12 12"><path d="M2.3 11.8 V0.4 M0.1 2.8 L2.3 0.2 L4.5 2.8" fill="none" stroke="#d5d5d5" stroke-width="1.1"/><path d="M8.6 0.2 V10.8 M6.4 8.4 L8.6 11.0 L10.8 8.4" fill="none" stroke="#d5d5d5" stroke-width="1"/></svg>
<svg class="a" style="left:1167.50px;top:287.70px;" width="12.00" height="12.00" viewBox="0 0 12 12"><path d="M2.3 11.8 V0.4 M0.1 2.8 L2.3 0.2 L4.5 2.8" fill="none" stroke="#d0d0d0" stroke-width="1.1"/><path d="M8.6 0.2 V10.8 M6.4 8.4 L8.6 11.0 L10.8 8.4" fill="none" stroke="#555" stroke-width="1"/></svg>
<svg class="a" style="left:1332.50px;top:287.70px;" width="12.00" height="12.00" viewBox="0 0 12 12"><path d="M2.3 11.8 V0.4 M0.1 2.8 L2.3 0.2 L4.5 2.8" fill="none" stroke="#d5d5d5" stroke-width="1.1"/><path d="M8.6 0.2 V10.8 M6.4 8.4 L8.6 11.0 L10.8 8.4" fill="none" stroke="#d5d5d5" stroke-width="1"/></svg>
<svg class="a" style="left:1496.50px;top:287.70px;" width="12.00" height="12.00" viewBox="0 0 12 12"><path d="M2.3 11.8 V0.4 M0.1 2.8 L2.3 0.2 L4.5 2.8" fill="none" stroke="#d5d5d5" stroke-width="1.1"/><path d="M8.6 0.2 V10.8 M6.4 8.4 L8.6 11.0 L10.8 8.4" fill="none" stroke="#d5d5d5" stroke-width="1"/></svg>
<svg class="a" style="left:1531.00px;top:288.80px;" width="10.50" height="13.00" viewBox="0 0 10.5 13"><g fill="none" stroke="#111" stroke-width="1.6"><circle cx="2.2" cy="2.2" r="1.4"/><circle cx="2.2" cy="11" r="1.4"/><circle cx="8.4" cy="3.2" r="1.4"/><path d="M2.2 3.6 V9.6 M8.4 4.6 C8.4 7.5 2.2 6.8 2.2 9.6"/></g></svg>
<div class="a" style="left:100.30px;top:327.80px;width:15.00px;height:15.00px;background:transparent;border:2px solid #353a44;border-radius:2px;box-sizing:border-box"></div>
<div class="t" style="left:137.20px;top:329.00px;font-size:13.45px;color:#212529;font-weight:400;transform:scaleY(1.07);transform-origin:0 11.00px;">2</div>
<div class="t" style="left:196.20px;top:329.00px;font-size:13.45px;color:#212529;font-weight:400;transform:scaleY(1.07);transform-origin:0 11.00px;">Erasmo KUCERA</div>
<div class="t" style="left:424.80px;top:329.00px;font-size:13.45px;color:#212529;font-weight:400;transform:scaleY(1.07);transform-origin:0 11.00px;">+33 91177365<span style="position:relative;display:inline-block;width:17px;height:1px"><svg style="position:absolute;left:4.2px;top:-9.9px" width="12.5" height="14" viewBox="0 0 12.5 14"><path fill="#0d0d12" d="M3.9 0.0 H9.1 V3.5 H12.5 V10.7 H3.9 Z"/><path fill="#0d0d12" d="M9.9 0.0 L12.5 2.6 H9.9 Z"/><path fill="#0d0d12" d="M0.1 2.5 H3.0 V11.0 H8.9 V13.3 H0.1 Z"/></svg></span></div>
<div class="t" style="left:608.10px;top:329.00px;font-size:13.45px;color:#212529;font-weight:400;transform:scaleY(1.07);transform-origin:0 11.00px;">-- / France</div>
<div class="t" style="left:811.20px;top:329.00px;font-size:13.45px;color:#212529;font-weight:400;transform:scaleY(1.07);transform-origin:0 11.00px;">Burun Estetiğii Kampanya<span style="font-size:10.2px;color:#e03c4c;margin-left:4.8px;position:relative;top:2px">Avrupa</span></div>
<div class="t" style="left:1033.20px;top:329.00px;font-size:13.45px;color:#212529;font-weight:400;transform:scaleY(1.07);transform-origin:0 11.00px;">25.03.2026 19:45:46</div>
<div class="t" style="left:1196.60px;top:325.10px;height:19.4px;line-height:19.4px;padding:0 5.2px;box-sizing:border-box;font-size:12.5px;font-weight:700;color:#fff;background:#a384b0;border-radius:3px"><span style="display:inline-block;position:relative;top:2px;transform:scaleY(1.07);transform-origin:0 13px">Info Given</span></div>
<div class="t" style="left:1360.20px;top:325.10px;height:19.4px;line-height:19.4px;padding:0 5.2px;box-sizing:border-box;font-size:12.5px;font-weight:700;color:#fff;background:#0000a8;border-radius:3px"><span style="display:inline-block;position:relative;top:2px;transform:scaleY(1.07);transform-origin:0 13px">Agent USER</span></div>
<svg class="a" style="left:1524.60px;top:326.00px;" width="23.50" height="19.75" viewBox="0 0 23.5 19.75"><rect x="0" y="0" width="23.5" height="19.75" rx="4" fill="#5157e0"/><path d="M11.6 4.6 H6.2 Q4.8 4.6 4.8 6.0 V15.1 Q4.8 16.5 6.2 16.5 H14.4 Q15.8 16.5 15.8 15.1 V11.8" fill="none" stroke="#fff" stroke-width="1.55"/><path d="M8.4 13.6 L8.9 10.5 L15.9 3.8 Q16.9 2.9 17.9 3.9 L18.9 5.0 Q19.8 6.0 18.9 6.9 L11.6 13.2 Z" fill="none" stroke="#fff" stroke-width="1.35" stroke-linejoin="round"/></svg>
<div class="a" style="left:100.30px;top:366.06px;width:15.00px;height:15.00px;background:transparent;border:2px solid #353a44;border-radius:2px;box-sizing:border-box"></div>
<div class="t" style="left:137.20px;top:367.00px;font-size:13.45px;color:#212529;font-weight:400;transform:scaleY(1.07);transform-origin:0 11.00px;">4</div>
<div class="t" style="left:196.20px;top:367.00px;font-size:13.45px;color:#212529;font-weight:400;transform:scaleY(1.07);transform-origin:0 11.00px;">Alejandro MAYORAL</div>
<div class="t" style="left:424.80px;top:367.00px;font-size:13.45px;color:#212529;font-weight:400;transform:scaleY(1.07);transform-origin:0 11.00px;">+31 17359226<span style="position:relative;display:inline-block;width:17px;height:1px"><svg style="position:absolute;left:4.2px;top:-9.9px" width="12.5" height="14" viewBox="0 0 12.5 14"><path fill="#0d0d12" d="M3.9 0.0 H9.1 V3.5 H12.5 V10.7 H3.9 Z"/><path fill="#0d0d12" d="M9.9 0.0 L12.5 2.6 H9.9 Z"/><path fill="#0d0d12" d="M0.1 2.5 H3.0 V11.0 H8.9 V13.3 H0.1 Z"/></svg></span></div>
<div class="t" style="left:608.10px;top:367.00px;font-size:13.45px;color:#212529;font-weight:400;transform:scaleY(1.07);transform-origin:0 11.00px;">-- / Netherlands</div>
<div class="t" style="left:811.20px;top:367.00px;font-size:13.45px;color:#212529;font-weight:400;transform:scaleY(1.07);transform-origin:0 11.00px;">Burun Estetiğii Kampanya<span style="font-size:10.2px;color:#e03c4c;margin-left:4.8px;position:relative;top:2px">Avrupa</span></div>
<div class="t" style="left:1033.20px;top:367.00px;font-size:13.45px;color:#212529;font-weight:400;transform:scaleY(1.07);transform-origin:0 11.00px;">25.03.2026 18:00:47</div>
<div class="t" style="left:1196.60px;top:363.36px;height:19.4px;line-height:19.4px;padding:0 5.2px;box-sizing:border-box;font-size:12.5px;font-weight:700;color:#fff;background:#a384b0;border-radius:3px"><span style="display:inline-block;position:relative;top:2px;transform:scaleY(1.07);transform-origin:0 13px">Info Given</span></div>
<div class="t" style="left:1360.20px;top:363.36px;height:19.4px;line-height:19.4px;padding:0 5.2px;box-sizing:border-box;font-size:12.5px;font-weight:700;color:#fff;background:#0000a8;border-radius:3px"><span style="display:inline-block;position:relative;top:2px;transform:scaleY(1.07);transform-origin:0 13px">Agent USER</span></div>
<svg class="a" style="left:1524.60px;top:364.26px;" width="23.50" height="19.75" viewBox="0 0 23.5 19.75"><rect x="0" y="0" width="23.5" height="19.75" rx="4" fill="#5157e0"/><path d="M11.6 4.6 H6.2 Q4.8 4.6 4.8 6.0 V15.1 Q4.8 16.5 6.2 16.5 H14.4 Q15.8 16.5 15.8 15.1 V11.8" fill="none" stroke="#fff" stroke-width="1.55"/><path d="M8.4 13.6 L8.9 10.5 L15.9 3.8 Q16.9 2.9 17.9 3.9 L18.9 5.0 Q19.8 6.0 18.9 6.9 L11.6 13.2 Z" fill="none" stroke="#fff" stroke-width="1.35" stroke-linejoin="round"/></svg>
<div class="a" style="left:100.30px;top:404.32px;width:15.00px;height:15.00px;background:transparent;border:2px solid #353a44;border-radius:2px;box-sizing:border-box"></div>
<div class="t" style="left:137.20px;top:405.00px;font-size:13.45px;color:#212529;font-weight:400;transform:scaleY(1.07);transform-origin:0 11.00px;">3</div>
<div class="t" style="left:196.20px;top:405.00px;font-size:13.45px;color:#212529;font-weight:400;transform:scaleY(1.07);transform-origin:0 11.00px;">Tyisha SCHEWE</div>
<div class="t" style="left:424.80px;top:405.00px;font-size:13.45px;color:#212529;font-weight:400;transform:scaleY(1.07);transform-origin:0 11.00px;">+33 358-1614<span style="position:relative;display:inline-block;width:17px;height:1px"><svg style="position:absolute;left:4.2px;top:-9.9px" width="12.5" height="14" viewBox="0 0 12.5 14"><path fill="#0d0d12" d="M3.9 0.0 H9.1 V3.5 H12.5 V10.7 H3.9 Z"/><path fill="#0d0d12" d="M9.9 0.0 L12.5 2.6 H9.9 Z"/><path fill="#0d0d12" d="M0.1 2.5 H3.0 V11.0 H8.9 V13.3 H0.1 Z"/></svg></span></div>
<div class="t" style="left:608.10px;top:405.00px;font-size:13.45px;color:#212529;font-weight:400;transform:scaleY(1.07);transform-origin:0 11.00px;">-- / France</div>
<div class="t" style="left:811.20px;top:405.00px;font-size:13.45px;color:#212529;font-weight:400;transform:scaleY(1.07);transform-origin:0 11.00px;">Burun Estetiği<span style="font-size:10.2px;color:#e03c4c;margin-left:4.8px;position:relative;top:2px">Avrupa</span></div>
<div class="t" style="left:1033.20px;top:405.00px;font-size:13.45px;color:#212529;font-weight:400;transform:scaleY(1.07);transform-origin:0 11.00px;">25.03.2026 14:45:38</div>
<div class="t" style="left:1196.60px;top:401.62px;height:19.4px;line-height:19.4px;padding:0 5.2px;box-sizing:border-box;font-size:12.5px;font-weight:700;color:#fff;background:#2f4a44;border-radius:3px"><span style="display:inline-block;position:relative;top:1px;transform:scaleY(1.07);transform-origin:0 13px">Price Over</span></div>
<div class="t" style="left:1360.20px;top:401.62px;height:19.4px;line-height:19.4px;padding:0 5.2px;box-sizing:border-box;font-size:12.5px;font-weight:700;color:#fff;background:#0000a8;border-radius:3px"><span style="display:inline-block;position:relative;top:1px;transform:scaleY(1.07);transform-origin:0 13px">Agent USER</span></div>
<svg class="a" style="left:1524.60px;top:402.52px;" width="23.50" height="19.75" viewBox="0 0 23.5 19.75"><rect x="0" y="0" width="23.5" height="19.75" rx="4" fill="#5157e0"/><path d="M11.6 4.6 H6.2 Q4.8 4.6 4.8 6.0 V15.1 Q4.8 16.5 6.2 16.5 H14.4 Q15.8 16.5 15.8 15.1 V11.8" fill="none" stroke="#fff" stroke-width="1.55"/><path d="M8.4 13.6 L8.9 10.5 L15.9 3.8 Q16.9 2.9 17.9 3.9 L18.9 5.0 Q19.8 6.0 18.9 6.9 L11.6 13.2 Z" fill="none" stroke="#fff" stroke-width="1.35" stroke-linejoin="round"/></svg>
<div class="a" style="left:100.30px;top:442.58px;width:15.00px;height:15.00px;background:transparent;border:2px solid #353a44;border-radius:2px;box-sizing:border-box"></div>
<div class="t" style="left:137.20px;top:444.00px;font-size:13.45px;color:#212529;font-weight:400;transform:scaleY(1.07);transform-origin:0 11.00px;">7</div>
<div class="t" style="left:196.20px;top:444.00px;font-size:13.45px;color:#212529;font-weight:400;transform:scaleY(1.07);transform-origin:0 11.00px;">Nancie PECORA</div>
<div class="t" style="left:424.80px;top:444.00px;font-size:13.45px;color:#212529;font-weight:400;transform:scaleY(1.07);transform-origin:0 11.00px;">+31 97085004<span style="position:relative;display:inline-block;width:17px;height:1px"><svg style="position:absolute;left:4.2px;top:-9.9px" width="12.5" height="14" viewBox="0 0 12.5 14"><path fill="#0d0d12" d="M3.9 0.0 H9.1 V3.5 H12.5 V10.7 H3.9 Z"/><path fill="#0d0d12" d="M9.9 0.0 L12.5 2.6 H9.9 Z"/><path fill="#0d0d12" d="M0.1 2.5 H3.0 V11.0 H8.9 V13.3 H0.1 Z"/></svg></span></div>
<div class="t" style="left:608.10px;top:444.00px;font-size:13.45px;color:#212529;font-weight:400;transform:scaleY(1.07);transform-origin:0 11.00px;">-- / Netherlands</div>
<div class="t" style="left:811.20px;top:444.00px;font-size:13.45px;color:#212529;font-weight:400;transform:scaleY(1.07);transform-origin:0 11.00px;">Burun Estetiğii Kampanya<span style="font-size:10.2px;color:#e03c4c;margin-left:4.8px;position:relative;top:2px">Avrupa</span></div>
<div class="t" style="left:1033.20px;top:444.00px;font-size:13.45px;color:#212529;font-weight:400;transform:scaleY(1.07);transform-origin:0 11.00px;">25.03.2026 11:45:14</div>
<div class="t" style="left:1196.60px;top:439.88px;height:19.4px;line-height:19.4px;padding:0 5.2px;box-sizing:border-box;font-size:12.5px;font-weight:700;color:#fff;background:#a384b0;border-radius:3px"><span style="display:inline-block;position:relative;top:2px;transform:scaleY(1.07);transform-origin:0 13px">Info Given</span></div>
<div class="t" style="left:1360.20px;top:439.88px;height:19.4px;line-height:19.4px;padding:0 5.2px;box-sizing:border-box;font-size:12.5px;font-weight:700;color:#fff;background:#0000a8;border-radius:3px"><span style="display:inline-block;position:relative;top:2px;transform:scaleY(1.07);transform-origin:0 13px">Agent USER</span></div>
<svg class="a" style="left:1524.60px;top:440.78px;" width="23.50" height="19.75" viewBox="0 0 23.5 19.75"><rect x="0" y="0" width="23.5" height="19.75" rx="4" fill="#5157e0"/><path d="M11.6 4.6 H6.2 Q4.8 4.6 4.8 6.0 V15.1 Q4.8 16.5 6.2 16.5 H14.4 Q15.8 16.5 15.8 15.1 V11.8" fill="none" stroke="#fff" stroke-width="1.55"/><path d="M8.4 13.6 L8.9 10.5 L15.9 3.8 Q16.9 2.9 17.9 3.9 L18.9 5.0 Q19.8 6.0 18.9 6.9 L11.6 13.2 Z" fill="none" stroke="#fff" stroke-width="1.35" stroke-linejoin="round"/></svg>
<div class="a" style="left:100.30px;top:480.84px;width:15.00px;height:15.00px;background:transparent;border:2px solid #353a44;border-radius:2px;box-sizing:border-box"></div>
<div class="t" style="left:137.20px;top:482.00px;font-size:13.45px;color:#212529;font-weight:400;transform:scaleY(1.07);transform-origin:0 11.00px;">1</div>
<div class="t" style="left:196.20px;top:482.00px;font-size:13.45px;color:#212529;font-weight:400;transform:scaleY(1.07);transform-origin:0 11.00px;">Johnathon WRONA</div>
<div class="t" style="left:424.80px;top:482.00px;font-size:13.45px;color:#212529;font-weight:400;transform:scaleY(1.07);transform-origin:0 11.00px;">+49 38695597<span style="position:relative;display:inline-block;width:17px;height:1px"><svg style="position:absolute;left:4.2px;top:-9.9px" width="12.5" height="14" viewBox="0 0 12.5 14"><path fill="#0d0d12" d="M3.9 0.0 H9.1 V3.5 H12.5 V10.7 H3.9 Z"/><path fill="#0d0d12" d="M9.9 0.0 L12.5 2.6 H9.9 Z"/><path fill="#0d0d12" d="M0.1 2.5 H3.0 V11.0 H8.9 V13.3 H0.1 Z"/></svg></span></div>
<div class="t" style="left:608.10px;top:482.00px;font-size:13.45px;color:#212529;font-weight:400;transform:scaleY(1.07);transform-origin:0 11.00px;">-- / Germany</div>
<div class="t" style="left:811.20px;top:482.00px;font-size:13.45px;color:#212529;font-weight:400;transform:scaleY(1.07);transform-origin:0 11.00px;">Burun Estetiği<span style="font-size:10.2px;color:#e03c4c;margin-left:4.8px;position:relative;top:2px">Avrupa</span></div>
<div class="t" style="left:1033.20px;top:482.00px;font-size:13.45px;color:#212529;font-weight:400;transform:scaleY(1.07);transform-origin:0 11.00px;">25.03.2026 11:00:46</div>
<div class="t" style="left:1196.60px;top:478.14px;height:19.4px;line-height:19.4px;padding:0 5.2px;box-sizing:border-box;font-size:12.5px;font-weight:700;color:#fff;background:#a384b0;border-radius:3px"><span style="display:inline-block;position:relative;top:2px;transform:scaleY(1.07);transform-origin:0 13px">Info Given</span></div>
<div class="t" style="left:1360.20px;top:478.14px;height:19.4px;line-height:19.4px;padding:0 5.2px;box-sizing:border-box;font-size:12.5px;font-weight:700;color:#fff;background:#0000a8;border-radius:3px"><span style="display:inline-block;position:relative;top:2px;transform:scaleY(1.07);transform-origin:0 13px">Agent USER</span></div>
<svg class="a" style="left:1524.60px;top:479.04px;" width="23.50" height="19.75" viewBox="0 0 23.5 19.75"><rect x="0" y="0" width="23.5" height="19.75" rx="4" fill="#5157e0"/><path d="M11.6 4.6 H6.2 Q4.8 4.6 4.8 6.0 V15.1 Q4.8 16.5 6.2 16.5 H14.4 Q15.8 16.5 15.8 15.1 V11.8" fill="none" stroke="#fff" stroke-width="1.55"/><path d="M8.4 13.6 L8.9 10.5 L15.9 3.8 Q16.9 2.9 17.9 3.9 L18.9 5.0 Q19.8 6.0 18.9 6.9 L11.6 13.2 Z" fill="none" stroke="#fff" stroke-width="1.35" stroke-linejoin="round"/></svg>
<div class="a" style="left:100.30px;top:519.10px;width:15.00px;height:15.00px;background:transparent;border:2px solid #353a44;border-radius:2px;box-sizing:border-box"></div>
<div class="t" style="left:137.20px;top:520.00px;font-size:13.45px;color:#212529;font-weight:400;transform:scaleY(1.07);transform-origin:0 11.00px;">5</div>
<div class="t" style="left:196.20px;top:520.00px;font-size:13.45px;color:#212529;font-weight:400;transform:scaleY(1.07);transform-origin:0 11.00px;">Sharie NOREN</div>
<div class="t" style="left:424.80px;top:520.00px;font-size:13.45px;color:#212529;font-weight:400;transform:scaleY(1.07);transform-origin:0 11.00px;">+33 32234378<span style="position:relative;display:inline-block;width:17px;height:1px"><svg style="position:absolute;left:4.2px;top:-9.9px" width="12.5" height="14" viewBox="0 0 12.5 14"><path fill="#0d0d12" d="M3.9 0.0 H9.1 V3.5 H12.5 V10.7 H3.9 Z"/><path fill="#0d0d12" d="M9.9 0.0 L12.5 2.6 H9.9 Z"/><path fill="#0d0d12" d="M0.1 2.5 H3.0 V11.0 H8.9 V13.3 H0.1 Z"/></svg></span></div>
<div class="t" style="left:608.10px;top:520.00px;font-size:13.45px;color:#212529;font-weight:400;transform:scaleY(1.07);transform-origin:0 11.00px;">-- / France</div>
<div class="t" style="left:811.20px;top:520.00px;font-size:13.45px;color:#212529;font-weight:400;transform:scaleY(1.07);transform-origin:0 11.00px;">Burun Estetiğii Kampanya<span style="font-size:10.2px;color:#e03c4c;margin-left:4.8px;position:relative;top:2px">Avrupa</span></div>
<div class="t" style="left:1033.20px;top:520.00px;font-size:13.45px;color:#212529;font-weight:400;transform:scaleY(1.07);transform-origin:0 11.00px;">25.03.2026 06:15:58</div>
<div class="t" style="left:1196.60px;top:516.40px;height:19.4px;line-height:19.4px;padding:0 5.2px;box-sizing:border-box;font-size:12.5px;font-weight:700;color:#fff;background:#a384b0;border-radius:3px"><span style="display:inline-block;position:relative;top:2px;transform:scaleY(1.07);transform-origin:0 13px">Info Given</span></div>
<div class="t" style="left:1360.20px;top:516.40px;height:19.4px;line-height:19.4px;padding:0 5.2px;box-sizing:border-box;font-size:12.5px;font-weight:700;color:#fff;background:#0000a8;border-radius:3px"><span style="display:inline-block;position:relative;top:2px;transform:scaleY(1.07);transform-origin:0 13px">Agent USER</span></div>
<svg class="a" style="left:1524.60px;top:517.30px;" width="23.50" height="19.75" viewBox="0 0 23.5 19.75"><rect x="0" y="0" width="23.5" height="19.75" rx="4" fill="#5157e0"/><path d="M11.6 4.6 H6.2 Q4.8 4.6 4.8 6.0 V15.1 Q4.8 16.5 6.2 16.5 H14.4 Q15.8 16.5 15.8 15.1 V11.8" fill="none" stroke="#fff" stroke-width="1.55"/><path d="M8.4 13.6 L8.9 10.5 L15.9 3.8 Q16.9 2.9 17.9 3.9 L18.9 5.0 Q19.8 6.0 18.9 6.9 L11.6 13.2 Z" fill="none" stroke="#fff" stroke-width="1.35" stroke-linejoin="round"/></svg>
<div class="a" style="left:100.30px;top:557.36px;width:15.00px;height:15.00px;background:transparent;border:2px solid #353a44;border-radius:2px;box-sizing:border-box"></div>
<div class="t" style="left:137.20px;top:558.00px;font-size:13.45px;color:#212529;font-weight:400;transform:scaleY(1.07);transform-origin:0 11.00px;">6</div>
<div class="t" style="left:196.20px;top:558.00px;font-size:13.45px;color:#212529;font-weight:400;transform:scaleY(1.07);transform-origin:0 11.00px;">Tyisha CATT<span style="font-size:11.6px;font-weight:700;margin-left:8.5px">(22.05.2026 22:00)</span></div>
<div class="t" style="left:424.80px;top:558.00px;font-size:13.45px;color:#212529;font-weight:400;transform:scaleY(1.07);transform-origin:0 11.00px;">+33 77618406<span style="position:relative;display:inline-block;width:17px;height:1px"><svg style="position:absolute;left:4.2px;top:-9.9px" width="12.5" height="14" viewBox="0 0 12.5 14"><path fill="#0d0d12" d="M3.9 0.0 H9.1 V3.5 H12.5 V10.7 H3.9 Z"/><path fill="#0d0d12" d="M9.9 0.0 L12.5 2.6 H9.9 Z"/><path fill="#0d0d12" d="M0.1 2.5 H3.0 V11.0 H8.9 V13.3 H0.1 Z"/></svg></span></div>
<div class="t" style="left:608.10px;top:558.00px;font-size:13.45px;color:#212529;font-weight:400;transform:scaleY(1.07);transform-origin:0 11.00px;">-- / France</div>
<div class="t" style="left:811.20px;top:558.00px;font-size:13.45px;color:#212529;font-weight:400;transform:scaleY(1.07);transform-origin:0 11.00px;">Burun Estetiğii Kampanya<span style="font-size:10.2px;color:#e03c4c;margin-left:4.8px;position:relative;top:2px">Avrupa</span></div>
<div class="t" style="left:1033.20px;top:558.00px;font-size:13.45px;color:#212529;font-weight:400;transform:scaleY(1.07);transform-origin:0 11.00px;">25.03.2026 06:15:00</div>
<div class="t" style="left:1196.60px;top:554.66px;height:19.4px;line-height:19.4px;padding:0 5.2px;box-sizing:border-box;font-size:12.5px;font-weight:700;color:#fff;background:#c0168c;border-radius:3px"><span style="display:inline-block;position:relative;top:1px;transform:scaleY(1.07);transform-origin:0 13px">Future Date</span></div>
<div class="t" style="left:1360.20px;top:554.66px;height:19.4px;line-height:19.4px;padding:0 5.2px;box-sizing:border-box;font-size:12.5px;font-weight:700;color:#fff;background:#0000a8;border-radius:3px"><span style="display:inline-block;position:relative;top:1px;transform:scaleY(1.07);transform-origin:0 13px">Agent USER</span></div>
<svg class="a" style="left:1524.60px;top:555.56px;" width="23.50" height="19.75" viewBox="0 0 23.5 19.75"><rect x="0" y="0" width="23.5" height="19.75" rx="4" fill="#5157e0"/><path d="M11.6 4.6 H6.2 Q4.8 4.6 4.8 6.0 V15.1 Q4.8 16.5 6.2 16.5 H14.4 Q15.8 16.5 15.8 15.1 V11.8" fill="none" stroke="#fff" stroke-width="1.55"/><path d="M8.4 13.6 L8.9 10.5 L15.9 3.8 Q16.9 2.9 17.9 3.9 L18.9 5.0 Q19.8 6.0 18.9 6.9 L11.6 13.2 Z" fill="none" stroke="#fff" stroke-width="1.35" stroke-linejoin="round"/></svg>
<div class="a" style="left:100.30px;top:595.62px;width:15.00px;height:15.00px;background:transparent;border:2px solid #353a44;border-radius:2px;box-sizing:border-box"></div>
<div class="t" style="left:137.20px;top:596.00px;font-size:13.45px;color:#212529;font-weight:400;transform:scaleY(1.07);transform-origin:0 11.00px;">15</div>
<div class="t" style="left:196.20px;top:596.00px;font-size:13.45px;color:#212529;font-weight:400;transform:scaleY(1.07);transform-origin:0 11.00px;">Clora DREWS</div>
<div class="t" style="left:424.80px;top:596.00px;font-size:13.45px;color:#212529;font-weight:400;transform:scaleY(1.07);transform-origin:0 11.00px;">+32 65973027<span style="position:relative;display:inline-block;width:17px;height:1px"><svg style="position:absolute;left:4.2px;top:-9.9px" width="12.5" height="14" viewBox="0 0 12.5 14"><path fill="#0d0d12" d="M3.9 0.0 H9.1 V3.5 H12.5 V10.7 H3.9 Z"/><path fill="#0d0d12" d="M9.9 0.0 L12.5 2.6 H9.9 Z"/><path fill="#0d0d12" d="M0.1 2.5 H3.0 V11.0 H8.9 V13.3 H0.1 Z"/></svg></span></div>
<div class="t" style="left:608.10px;top:596.00px;font-size:13.45px;color:#212529;font-weight:400;transform:scaleY(1.07);transform-origin:0 11.00px;">-- / Belgium</div>
<div class="t" style="left:811.20px;top:596.00px;font-size:13.45px;color:#212529;font-weight:400;transform:scaleY(1.07);transform-origin:0 11.00px;">Burun Estetiğii Kampanya<span style="font-size:10.2px;color:#e03c4c;margin-left:4.8px;position:relative;top:2px">Avrupa</span></div>
<div class="t" style="left:1033.20px;top:596.00px;font-size:13.45px;color:#212529;font-weight:400;transform:scaleY(1.07);transform-origin:0 11.00px;">19.03.2026 19:15:04</div>
<div class="t" style="left:1196.60px;top:592.92px;height:19.4px;line-height:19.4px;padding:0 5.2px;box-sizing:border-box;font-size:12.5px;font-weight:700;color:#fff;background:#a384b0;border-radius:3px"><span style="display:inline-block;position:relative;top:1px;transform:scaleY(1.07);transform-origin:0 13px">Info Given</span></div>
<div class="t" style="left:1360.20px;top:592.92px;height:19.4px;line-height:19.4px;padding:0 5.2px;box-sizing:border-box;font-size:12.5px;font-weight:700;color:#fff;background:#0000a8;border-radius:3px"><span style="display:inline-block;position:relative;top:1px;transform:scaleY(1.07);transform-origin:0 13px">Agent USER</span></div>
<svg class="a" style="left:1524.60px;top:593.82px;" width="23.50" height="19.75" viewBox="0 0 23.5 19.75"><rect x="0" y="0" width="23.5" height="19.75" rx="4" fill="#5157e0"/><path d="M11.6 4.6 H6.2 Q4.8 4.6 4.8 6.0 V15.1 Q4.8 16.5 6.2 16.5 H14.4 Q15.8 16.5 15.8 15.1 V11.8" fill="none" stroke="#fff" stroke-width="1.55"/><path d="M8.4 13.6 L8.9 10.5 L15.9 3.8 Q16.9 2.9 17.9 3.9 L18.9 5.0 Q19.8 6.0 18.9 6.9 L11.6 13.2 Z" fill="none" stroke="#fff" stroke-width="1.35" stroke-linejoin="round"/></svg>
<div class="a" style="left:100.30px;top:633.88px;width:15.00px;height:15.00px;background:transparent;border:2px solid #353a44;border-radius:2px;box-sizing:border-box"></div>
<div class="t" style="left:137.20px;top:635.00px;font-size:13.45px;color:#212529;font-weight:400;transform:scaleY(1.07);transform-origin:0 11.00px;">28</div>
<div class="t" style="left:196.20px;top:635.00px;font-size:13.45px;color:#212529;font-weight:400;transform:scaleY(1.07);transform-origin:0 11.00px;">Georgianna MOTSİNGER</div>
<div class="t" style="left:424.80px;top:635.00px;font-size:13.45px;color:#212529;font-weight:400;transform:scaleY(1.07);transform-origin:0 11.00px;">+351 901-4156<span style="position:relative;display:inline-block;width:17px;height:1px"><svg style="position:absolute;left:4.2px;top:-9.9px" width="12.5" height="14" viewBox="0 0 12.5 14"><path fill="#0d0d12" d="M3.9 0.0 H9.1 V3.5 H12.5 V10.7 H3.9 Z"/><path fill="#0d0d12" d="M9.9 0.0 L12.5 2.6 H9.9 Z"/><path fill="#0d0d12" d="M0.1 2.5 H3.0 V11.0 H8.9 V13.3 H0.1 Z"/></svg></span></div>
<div class="t" style="left:608.10px;top:635.00px;font-size:13.45px;color:#212529;font-weight:400;transform:scaleY(1.07);transform-origin:0 11.00px;">-- / Portugal</div>
<div class="t" style="left:811.20px;top:635.00px;font-size:13.45px;color:#212529;font-weight:400;transform:scaleY(1.07);transform-origin:0 11.00px;">Burun Estetiğii Kampanya<span style="font-size:10.2px;color:#e03c4c;margin-left:4.8px;position:relative;top:2px">Avrupa</span></div>
<div class="t" style="left:1033.20px;top:635.00px;font-size:13.45px;color:#212529;font-weight:400;transform:scaleY(1.07);transform-origin:0 11.00px;">17.03.2026 17:30:43</div>
<div class="t" style="left:1196.60px;top:631.18px;height:19.4px;line-height:19.4px;padding:0 5.2px;box-sizing:border-box;font-size:12.5px;font-weight:700;color:#fff;background:#a384b0;border-radius:3px"><span style="display:inline-block;position:relative;top:2px;transform:scaleY(1.07);transform-origin:0 13px">Info Given</span></div>
<div class="t" style="left:1360.20px;top:631.18px;height:19.4px;line-height:19.4px;padding:0 5.2px;box-sizing:border-box;font-size:12.5px;font-weight:700;color:#fff;background:#0000a8;border-radius:3px"><span style="display:inline-block;position:relative;top:2px;transform:scaleY(1.07);transform-origin:0 13px">Agent USER</span></div>
<svg class="a" style="left:1524.60px;top:632.08px;" width="23.50" height="19.75" viewBox="0 0 23.5 19.75"><rect x="0" y="0" width="23.5" height="19.75" rx="4" fill="#5157e0"/><path d="M11.6 4.6 H6.2 Q4.8 4.6 4.8 6.0 V15.1 Q4.8 16.5 6.2 16.5 H14.4 Q15.8 16.5 15.8 15.1 V11.8" fill="none" stroke="#fff" stroke-width="1.55"/><path d="M8.4 13.6 L8.9 10.5 L15.9 3.8 Q16.9 2.9 17.9 3.9 L18.9 5.0 Q19.8 6.0 18.9 6.9 L11.6 13.2 Z" fill="none" stroke="#fff" stroke-width="1.35" stroke-linejoin="round"/></svg>
<div class="a" style="left:100.30px;top:672.14px;width:15.00px;height:15.00px;background:transparent;border:2px solid #353a44;border-radius:2px;box-sizing:border-box"></div>
<div class="t" style="left:137.20px;top:673.00px;font-size:13.45px;color:#212529;font-weight:400;transform:scaleY(1.07);transform-origin:0 11.00px;">30</div>
<div class="t" style="left:196.20px;top:673.00px;font-size:13.45px;color:#212529;font-weight:400;transform:scaleY(1.07);transform-origin:0 11.00px;">Augustine CENTER</div>
<div class="t" style="left:424.80px;top:673.00px;font-size:13.45px;color:#212529;font-weight:400;transform:scaleY(1.07);transform-origin:0 11.00px;">+41 40210601<span style="position:relative;display:inline-block;width:17px;height:1px"><svg style="position:absolute;left:4.2px;top:-9.9px" width="12.5" height="14" viewBox="0 0 12.5 14"><path fill="#0d0d12" d="M3.9 0.0 H9.1 V3.5 H12.5 V10.7 H3.9 Z"/><path fill="#0d0d12" d="M9.9 0.0 L12.5 2.6 H9.9 Z"/><path fill="#0d0d12" d="M0.1 2.5 H3.0 V11.0 H8.9 V13.3 H0.1 Z"/></svg></span></div>
<div class="t" style="left:608.10px;top:673.00px;font-size:13.45px;color:#212529;font-weight:400;transform:scaleY(1.07);transform-origin:0 11.00px;">-- / Switzerland</div>
<div class="t" style="left:811.20px;top:673.00px;font-size:13.45px;color:#212529;font-weight:400;transform:scaleY(1.07);transform-origin:0 11.00px;">Burun Estetiğii Kampanya<span style="font-size:10.2px;color:#e03c4c;margin-left:4.8px;position:relative;top:2px">Avrupa</span></div>
<div class="t" style="left:1033.20px;top:673.00px;font-size:13.45px;color:#212529;font-weight:400;transform:scaleY(1.07);transform-origin:0 11.00px;">16.03.2026 00:00:11</div>
<div class="t" style="left:1196.60px;top:669.44px;height:19.4px;line-height:19.4px;padding:0 5.2px;box-sizing:border-box;font-size:12.5px;font-weight:700;color:#fff;background:#a384b0;border-radius:3px"><span style="display:inline-block;position:relative;top:2px;transform:scaleY(1.07);transform-origin:0 13px">Info Given</span></div>
<div class="t" style="left:1360.20px;top:669.44px;height:19.4px;line-height:19.4px;padding:0 5.2px;box-sizing:border-box;font-size:12.5px;font-weight:700;color:#fff;background:#0000a8;border-radius:3px"><span style="display:inline-block;position:relative;top:2px;transform:scaleY(1.07);transform-origin:0 13px">Agent USER</span></div>
<svg class="a" style="left:1524.60px;top:670.34px;" width="23.50" height="19.75" viewBox="0 0 23.5 19.75"><rect x="0" y="0" width="23.5" height="19.75" rx="4" fill="#5157e0"/><path d="M11.6 4.6 H6.2 Q4.8 4.6 4.8 6.0 V15.1 Q4.8 16.5 6.2 16.5 H14.4 Q15.8 16.5 15.8 15.1 V11.8" fill="none" stroke="#fff" stroke-width="1.55"/><path d="M8.4 13.6 L8.9 10.5 L15.9 3.8 Q16.9 2.9 17.9 3.9 L18.9 5.0 Q19.8 6.0 18.9 6.9 L11.6 13.2 Z" fill="none" stroke="#fff" stroke-width="1.35" stroke-linejoin="round"/></svg>
<div class="a" style="left:100.30px;top:710.40px;width:15.00px;height:15.00px;background:transparent;border:2px solid #353a44;border-radius:2px;box-sizing:border-box"></div>
<div class="t" style="left:137.20px;top:711.00px;font-size:13.45px;color:#212529;font-weight:400;transform:scaleY(1.07);transform-origin:0 11.00px;">27</div>
<div class="t" style="left:196.20px;top:711.00px;font-size:13.45px;color:#212529;font-weight:400;transform:scaleY(1.07);transform-origin:0 11.00px;">Tama PEKAR</div>
<div class="t" style="left:424.80px;top:711.00px;font-size:13.45px;color:#212529;font-weight:400;transform:scaleY(1.07);transform-origin:0 11.00px;">+43 53242816<span style="position:relative;display:inline-block;width:17px;height:1px"><svg style="position:absolute;left:4.2px;top:-9.9px" width="12.5" height="14" viewBox="0 0 12.5 14"><path fill="#0d0d12" d="M3.9 0.0 H9.1 V3.5 H12.5 V10.7 H3.9 Z"/><path fill="#0d0d12" d="M9.9 0.0 L12.5 2.6 H9.9 Z"/><path fill="#0d0d12" d="M0.1 2.5 H3.0 V11.0 H8.9 V13.3 H0.1 Z"/></svg></span></div>
<div class="t" style="left:608.10px;top:711.00px;font-size:13.45px;color:#212529;font-weight:400;transform:scaleY(1.07);transform-origin:0 11.00px;">-- / Austria</div>
<div class="t" style="left:811.20px;top:711.00px;font-size:13.45px;color:#212529;font-weight:400;transform:scaleY(1.07);transform-origin:0 11.00px;">Burun Estetiğii Kampanya<span style="font-size:10.2px;color:#e03c4c;margin-left:4.8px;position:relative;top:2px">Avrupa</span></div>
<div class="t" style="left:1033.20px;top:711.00px;font-size:13.45px;color:#212529;font-weight:400;transform:scaleY(1.07);transform-origin:0 11.00px;">11.03.2026 17:30:33</div>
<div class="t" style="left:1196.60px;top:707.70px;height:19.4px;line-height:19.4px;padding:0 5.2px;box-sizing:border-box;font-size:12.5px;font-weight:700;color:#fff;background:#a384b0;border-radius:3px"><span style="display:inline-block;position:relative;top:1px;transform:scaleY(1.07);transform-origin:0 13px">Info Given</span></div>
<div class="t" style="left:1360.20px;top:707.70px;height:19.4px;line-height:19.4px;padding:0 5.2px;box-sizing:border-box;font-size:12.5px;font-weight:700;color:#fff;background:#0000a8;border-radius:3px"><span style="display:inline-block;position:relative;top:1px;transform:scaleY(1.07);transform-origin:0 13px">Agent USER</span></div>
<svg class="a" style="left:1524.60px;top:708.60px;" width="23.50" height="19.75" viewBox="0 0 23.5 19.75"><rect x="0" y="0" width="23.5" height="19.75" rx="4" fill="#5157e0"/><path d="M11.6 4.6 H6.2 Q4.8 4.6 4.8 6.0 V15.1 Q4.8 16.5 6.2 16.5 H14.4 Q15.8 16.5 15.8 15.1 V11.8" fill="none" stroke="#fff" stroke-width="1.55"/><path d="M8.4 13.6 L8.9 10.5 L15.9 3.8 Q16.9 2.9 17.9 3.9 L18.9 5.0 Q19.8 6.0 18.9 6.9 L11.6 13.2 Z" fill="none" stroke="#fff" stroke-width="1.35" stroke-linejoin="round"/></svg>
<div class="a" style="left:100.30px;top:748.66px;width:15.00px;height:15.00px;background:transparent;border:2px solid #353a44;border-radius:2px;box-sizing:border-box"></div>
<div class="t" style="left:137.20px;top:749.00px;font-size:13.45px;color:#212529;font-weight:400;transform:scaleY(1.07);transform-origin:0 11.00px;">38</div>
<div class="t" style="left:196.20px;top:749.00px;font-size:13.45px;color:#212529;font-weight:400;transform:scaleY(1.07);transform-origin:0 11.00px;">Luis RODRİGUEZ DE ANDA</div>
<div class="t" style="left:424.80px;top:749.00px;font-size:13.45px;color:#212529;font-weight:400;transform:scaleY(1.07);transform-origin:0 11.00px;">+93 332 355-9138<span style="position:relative;display:inline-block;width:17px;height:1px"><svg style="position:absolute;left:4.2px;top:-9.9px" width="12.5" height="14" viewBox="0 0 12.5 14"><path fill="#0d0d12" d="M3.9 0.0 H9.1 V3.5 H12.5 V10.7 H3.9 Z"/><path fill="#0d0d12" d="M9.9 0.0 L12.5 2.6 H9.9 Z"/><path fill="#0d0d12" d="M0.1 2.5 H3.0 V11.0 H8.9 V13.3 H0.1 Z"/></svg></span></div>
<div class="t" style="left:608.10px;top:749.00px;font-size:13.45px;color:#212529;font-weight:400;transform:scaleY(1.07);transform-origin:0 11.00px;">-- / Afghanistan</div>
<div class="t" style="left:811.20px;top:749.00px;font-size:13.45px;color:#212529;font-weight:400;transform:scaleY(1.07);transform-origin:0 11.00px;">Burun Estetiğii Kampanya<span style="font-size:10.2px;color:#e03c4c;margin-left:4.8px;position:relative;top:2px">Avrupa</span></div>
<div class="t" style="left:1033.20px;top:749.00px;font-size:13.45px;color:#212529;font-weight:400;transform:scaleY(1.07);transform-origin:0 11.00px;">10.03.2026 19:00:28</div>
<div class="t" style="left:1196.60px;top:745.96px;height:19.4px;line-height:19.4px;padding:0 5.2px;box-sizing:border-box;font-size:12.5px;font-weight:700;color:#fff;background:#2e2f22;border-radius:3px"><span style="display:inline-block;position:relative;top:1px;transform:scaleY(1.07);transform-origin:0 13px">Duplicate Registration</span></div>
<div class="t" style="left:1360.20px;top:745.96px;height:19.4px;line-height:19.4px;padding:0 5.2px;box-sizing:border-box;font-size:12.5px;font-weight:700;color:#fff;background:#0000a8;border-radius:3px"><span style="display:inline-block;position:relative;top:1px;transform:scaleY(1.07);transform-origin:0 13px">Agent USER</span></div>
<svg class="a" style="left:1524.60px;top:746.86px;" width="23.50" height="19.75" viewBox="0 0 23.5 19.75"><rect x="0" y="0" width="23.5" height="19.75" rx="4" fill="#5157e0"/><path d="M11.6 4.6 H6.2 Q4.8 4.6 4.8 6.0 V15.1 Q4.8 16.5 6.2 16.5 H14.4 Q15.8 16.5 15.8 15.1 V11.8" fill="none" stroke="#fff" stroke-width="1.55"/><path d="M8.4 13.6 L8.9 10.5 L15.9 3.8 Q16.9 2.9 17.9 3.9 L18.9 5.0 Q19.8 6.0 18.9 6.9 L11.6 13.2 Z" fill="none" stroke="#fff" stroke-width="1.35" stroke-linejoin="round"/></svg>
<div class="a" style="left:100.30px;top:786.92px;width:15.00px;height:15.00px;background:transparent;border:2px solid #353a44;border-radius:2px;box-sizing:border-box"></div>
<div class="t" style="left:137.20px;top:787.00px;font-size:13.45px;color:#212529;font-weight:400;transform:scaleY(1.07);transform-origin:0 11.00px;">29</div>
<div class="t" style="left:196.20px;top:787.00px;font-size:13.45px;color:#212529;font-weight:400;transform:scaleY(1.07);transform-origin:0 11.00px;">Diego KLEMP</div>
<div class="t" style="left:424.80px;top:787.00px;font-size:13.45px;color:#212529;font-weight:400;transform:scaleY(1.07);transform-origin:0 11.00px;">+43 96166527<span style="position:relative;display:inline-block;width:17px;height:1px"><svg style="position:absolute;left:4.2px;top:-9.9px" width="12.5" height="14" viewBox="0 0 12.5 14"><path fill="#0d0d12" d="M3.9 0.0 H9.1 V3.5 H12.5 V10.7 H3.9 Z"/><path fill="#0d0d12" d="M9.9 0.0 L12.5 2.6 H9.9 Z"/><path fill="#0d0d12" d="M0.1 2.5 H3.0 V11.0 H8.9 V13.3 H0.1 Z"/></svg></span></div>
<div class="t" style="left:608.10px;top:787.00px;font-size:13.45px;color:#212529;font-weight:400;transform:scaleY(1.07);transform-origin:0 11.00px;">-- / Austria</div>
<div class="t" style="left:811.20px;top:787.00px;font-size:13.45px;color:#212529;font-weight:400;transform:scaleY(1.07);transform-origin:0 11.00px;">Burun Estetiğii Kampanya<span style="font-size:10.2px;color:#e03c4c;margin-left:4.8px;position:relative;top:2px">Avrupa</span></div>
<div class="t" style="left:1033.20px;top:787.00px;font-size:13.45px;color:#212529;font-weight:400;transform:scaleY(1.07);transform-origin:0 11.00px;">03.03.2026 17:00:28</div>
<div class="t" style="left:1196.60px;top:784.22px;height:19.4px;line-height:19.4px;padding:0 5.2px;box-sizing:border-box;font-size:12.5px;font-weight:700;color:#fff;background:#6b6b6b;border-radius:3px"><span style="display:inline-block;position:relative;top:1px;transform:scaleY(1.07);transform-origin:0 13px">Invalid Number</span></div>
<div class="t" style="left:1360.20px;top:784.22px;height:19.4px;line-height:19.4px;padding:0 5.2px;box-sizing:border-box;font-size:12.5px;font-weight:700;color:#fff;background:#0000a8;border-radius:3px"><span style="display:inline-block;position:relative;top:1px;transform:scaleY(1.07);transform-origin:0 13px">Agent USER</span></div>
<svg class="a" style="left:1524.60px;top:785.12px;" width="23.50" height="19.75" viewBox="0 0 23.5 19.75"><rect x="0" y="0" width="23.5" height="19.75" rx="4" fill="#5157e0"/><path d="M11.6 4.6 H6.2 Q4.8 4.6 4.8 6.0 V15.1 Q4.8 16.5 6.2 16.5 H14.4 Q15.8 16.5 15.8 15.1 V11.8" fill="none" stroke="#fff" stroke-width="1.55"/><path d="M8.4 13.6 L8.9 10.5 L15.9 3.8 Q16.9 2.9 17.9 3.9 L18.9 5.0 Q19.8 6.0 18.9 6.9 L11.6 13.2 Z" fill="none" stroke="#fff" stroke-width="1.35" stroke-linejoin="round"/></svg>
<div class="a" style="left:100.30px;top:825.18px;width:15.00px;height:15.00px;background:transparent;border:2px solid #353a44;border-radius:2px;box-sizing:border-box"></div>
<div class="t" style="left:137.20px;top:826.00px;font-size:13.45px;color:#212529;font-weight:400;transform:scaleY(1.07);transform-origin:0 11.00px;">36</div>
<div class="t" style="left:196.20px;top:826.00px;font-size:13.45px;color:#212529;font-weight:400;transform:scaleY(1.07);transform-origin:0 11.00px;">Demo DEMO<span style="font-size:11.6px;font-weight:700;margin-left:8.5px">(10.11.2026 23:45)</span></div>
<div class="t" style="left:424.80px;top:826.00px;font-size:13.45px;color:#212529;font-weight:400;transform:scaleY(1.07);transform-origin:0 11.00px;">+90 020 020-2020<span style="position:relative;display:inline-block;width:17px;height:1px"><svg style="position:absolute;left:4.2px;top:-9.9px" width="12.5" height="14" viewBox="0 0 12.5 14"><path fill="#0d0d12" d="M3.9 0.0 H9.1 V3.5 H12.5 V10.7 H3.9 Z"/><path fill="#0d0d12" d="M9.9 0.0 L12.5 2.6 H9.9 Z"/><path fill="#0d0d12" d="M0.1 2.5 H3.0 V11.0 H8.9 V13.3 H0.1 Z"/></svg></span></div>
<div class="t" style="left:608.10px;top:826.00px;font-size:13.45px;color:#212529;font-weight:400;transform:scaleY(1.07);transform-origin:0 11.00px;">-- / Turkey</div>
<div class="t" style="left:811.20px;top:826.00px;font-size:13.45px;color:#212529;font-weight:400;transform:scaleY(1.07);transform-origin:0 11.00px;">Burun Estetiği<span style="font-size:10.2px;color:#e03c4c;margin-left:4.8px;position:relative;top:2px">Türkiye</span></div>
<div class="t" style="left:1033.20px;top:826.00px;font-size:13.45px;color:#212529;font-weight:400;transform:scaleY(1.07);transform-origin:0 11.00px;">02.03.2026 13:45:22</div>
<div class="t" style="left:1196.60px;top:822.48px;height:19.4px;line-height:19.4px;padding:0 5.2px;box-sizing:border-box;font-size:12.5px;font-weight:700;color:#fff;background:#0a62f5;border-radius:3px"><span style="display:inline-block;position:relative;top:2px;transform:scaleY(1.07);transform-origin:0 13px">Transaction Done ✓</span></div>
<div class="t" style="left:1360.20px;top:822.48px;height:19.4px;line-height:19.4px;padding:0 5.2px;box-sizing:border-box;font-size:12.5px;font-weight:700;color:#fff;background:#6a1b9a;border-radius:3px"><span style="display:inline-block;position:relative;top:2px;transform:scaleY(1.07);transform-origin:0 13px">Global DEV</span></div>
<svg class="a" style="left:1524.60px;top:823.38px;" width="23.50" height="19.75" viewBox="0 0 23.5 19.75"><rect x="0" y="0" width="23.5" height="19.75" rx="4" fill="#5157e0"/><path d="M11.6 4.6 H6.2 Q4.8 4.6 4.8 6.0 V15.1 Q4.8 16.5 6.2 16.5 H14.4 Q15.8 16.5 15.8 15.1 V11.8" fill="none" stroke="#fff" stroke-width="1.55"/><path d="M8.4 13.6 L8.9 10.5 L15.9 3.8 Q16.9 2.9 17.9 3.9 L18.9 5.0 Q19.8 6.0 18.9 6.9 L11.6 13.2 Z" fill="none" stroke="#fff" stroke-width="1.35" stroke-linejoin="round"/></svg>
<div class="a" style="left:100.30px;top:863.44px;width:15.00px;height:15.00px;background:transparent;border:2px solid #353a44;border-radius:2px;box-sizing:border-box"></div>
<div class="t" style="left:137.20px;top:864.00px;font-size:13.45px;color:#212529;font-weight:400;transform:scaleY(1.07);transform-origin:0 11.00px;">12</div>
<div class="t" style="left:196.20px;top:864.00px;font-size:13.45px;color:#212529;font-weight:400;transform:scaleY(1.07);transform-origin:0 11.00px;">Tomi CENTER<span style="font-size:11.6px;font-weight:700;margin-left:8.5px">(28.12.2026 23:30)</span></div>
<div class="t" style="left:424.80px;top:864.00px;font-size:13.45px;color:#212529;font-weight:400;transform:scaleY(1.07);transform-origin:0 11.00px;">+373 57476907<span style="position:relative;display:inline-block;width:17px;height:1px"><svg style="position:absolute;left:4.2px;top:-9.9px" width="12.5" height="14" viewBox="0 0 12.5 14"><path fill="#0d0d12" d="M3.9 0.0 H9.1 V3.5 H12.5 V10.7 H3.9 Z"/><path fill="#0d0d12" d="M9.9 0.0 L12.5 2.6 H9.9 Z"/><path fill="#0d0d12" d="M0.1 2.5 H3.0 V11.0 H8.9 V13.3 H0.1 Z"/></svg></span></div>
<div class="t" style="left:608.10px;top:864.00px;font-size:13.45px;color:#212529;font-weight:400;transform:scaleY(1.07);transform-origin:0 11.00px;">-- / Moldova</div>
<div class="t" style="left:811.20px;top:864.00px;font-size:13.45px;color:#212529;font-weight:400;transform:scaleY(1.07);transform-origin:0 11.00px;">Burun Estetiğii Kampanya<span style="font-size:10.2px;color:#e03c4c;margin-left:4.8px;position:relative;top:2px">Avrupa</span></div>
<div class="t" style="left:1033.20px;top:864.00px;font-size:13.45px;color:#212529;font-weight:400;transform:scaleY(1.07);transform-origin:0 11.00px;">02.03.2026 03:45:42</div>
<div class="t" style="left:1196.60px;top:860.74px;height:19.4px;line-height:19.4px;padding:0 5.2px;box-sizing:border-box;font-size:12.5px;font-weight:700;color:#fff;background:#c0168c;border-radius:3px"><span style="display:inline-block;position:relative;top:1px;transform:scaleY(1.07);transform-origin:0 13px">Future Date</span></div>
<div class="t" style="left:1360.20px;top:860.74px;height:19.4px;line-height:19.4px;padding:0 5.2px;box-sizing:border-box;font-size:12.5px;font-weight:700;color:#fff;background:#0000a8;border-radius:3px"><span style="display:inline-block;position:relative;top:1px;transform:scaleY(1.07);transform-origin:0 13px">Agent USER</span></div>
<svg class="a" style="left:1524.60px;top:861.64px;" width="23.50" height="19.75" viewBox="0 0 23.5 19.75"><rect x="0" y="0" width="23.5" height="19.75" rx="4" fill="#5157e0"/><path d="M11.6 4.6 H6.2 Q4.8 4.6 4.8 6.0 V15.1 Q4.8 16.5 6.2 16.5 H14.4 Q15.8 16.5 15.8 15.1 V11.8" fill="none" stroke="#fff" stroke-width="1.55"/><path d="M8.4 13.6 L8.9 10.5 L15.9 3.8 Q16.9 2.9 17.9 3.9 L18.9 5.0 Q19.8 6.0 18.9 6.9 L11.6 13.2 Z" fill="none" stroke="#fff" stroke-width="1.35" stroke-linejoin="round"/></svg>
<div class="a" style="left:100.30px;top:901.70px;width:15.00px;height:15.00px;background:transparent;border:2px solid #353a44;border-radius:2px;box-sizing:border-box"></div>
<div class="t" style="left:137.20px;top:902.00px;font-size:13.45px;color:#212529;font-weight:400;transform:scaleY(1.07);transform-origin:0 11.00px;">18</div>
<div class="t" style="left:196.20px;top:902.00px;font-size:13.45px;color:#212529;font-weight:400;transform:scaleY(1.07);transform-origin:0 11.00px;">Bong SCHEWE</div>
<div class="t" style="left:424.80px;top:902.00px;font-size:13.45px;color:#212529;font-weight:400;transform:scaleY(1.07);transform-origin:0 11.00px;">+90 19907758<span style="position:relative;display:inline-block;width:17px;height:1px"><svg style="position:absolute;left:4.2px;top:-9.9px" width="12.5" height="14" viewBox="0 0 12.5 14"><path fill="#0d0d12" d="M3.9 0.0 H9.1 V3.5 H12.5 V10.7 H3.9 Z"/><path fill="#0d0d12" d="M9.9 0.0 L12.5 2.6 H9.9 Z"/><path fill="#0d0d12" d="M0.1 2.5 H3.0 V11.0 H8.9 V13.3 H0.1 Z"/></svg></span></div>
<div class="t" style="left:608.10px;top:902.00px;font-size:13.45px;color:#212529;font-weight:400;transform:scaleY(1.07);transform-origin:0 11.00px;">-- / Turkey</div>
<div class="t" style="left:811.20px;top:902.00px;font-size:13.45px;color:#212529;font-weight:400;transform:scaleY(1.07);transform-origin:0 11.00px;">Burun Estetiğii Kampanya<span style="font-size:10.2px;color:#e03c4c;margin-left:4.8px;position:relative;top:2px">Avrupa</span></div>
<div class="t" style="left:1033.20px;top:902.00px;font-size:13.45px;color:#212529;font-weight:400;transform:scaleY(1.07);transform-origin:0 11.00px;">27.02.2026 06:30:25</div>
<div class="t" style="left:1196.60px;top:899.00px;height:19.4px;line-height:19.4px;padding:0 5.2px;box-sizing:border-box;font-size:12.5px;font-weight:700;color:#fff;background:#a384b0;border-radius:3px"><span style="display:inline-block;position:relative;top:1px;transform:scaleY(1.07);transform-origin:0 13px">Info Given</span></div>
<div class="t" style="left:1360.20px;top:899.00px;height:19.4px;line-height:19.4px;padding:0 5.2px;box-sizing:border-box;font-size:12.5px;font-weight:700;color:#fff;background:#0000a8;border-radius:3px"><span style="display:inline-block;position:relative;top:1px;transform:scaleY(1.07);transform-origin:0 13px">Agent USER</span></div>
<svg class="a" style="left:1524.60px;top:899.90px;" width="23.50" height="19.75" viewBox="0 0 23.5 19.75"><rect x="0" y="0" width="23.5" height="19.75" rx="4" fill="#5157e0"/><path d="M11.6 4.6 H6.2 Q4.8 4.6 4.8 6.0 V15.1 Q4.8 16.5 6.2 16.5 H14.4 Q15.8 16.5 15.8 15.1 V11.8" fill="none" stroke="#fff" stroke-width="1.55"/><path d="M8.4 13.6 L8.9 10.5 L15.9 3.8 Q16.9 2.9 17.9 3.9 L18.9 5.0 Q19.8 6.0 18.9 6.9 L11.6 13.2 Z" fill="none" stroke="#fff" stroke-width="1.35" stroke-linejoin="round"/></svg>
</body></html>
